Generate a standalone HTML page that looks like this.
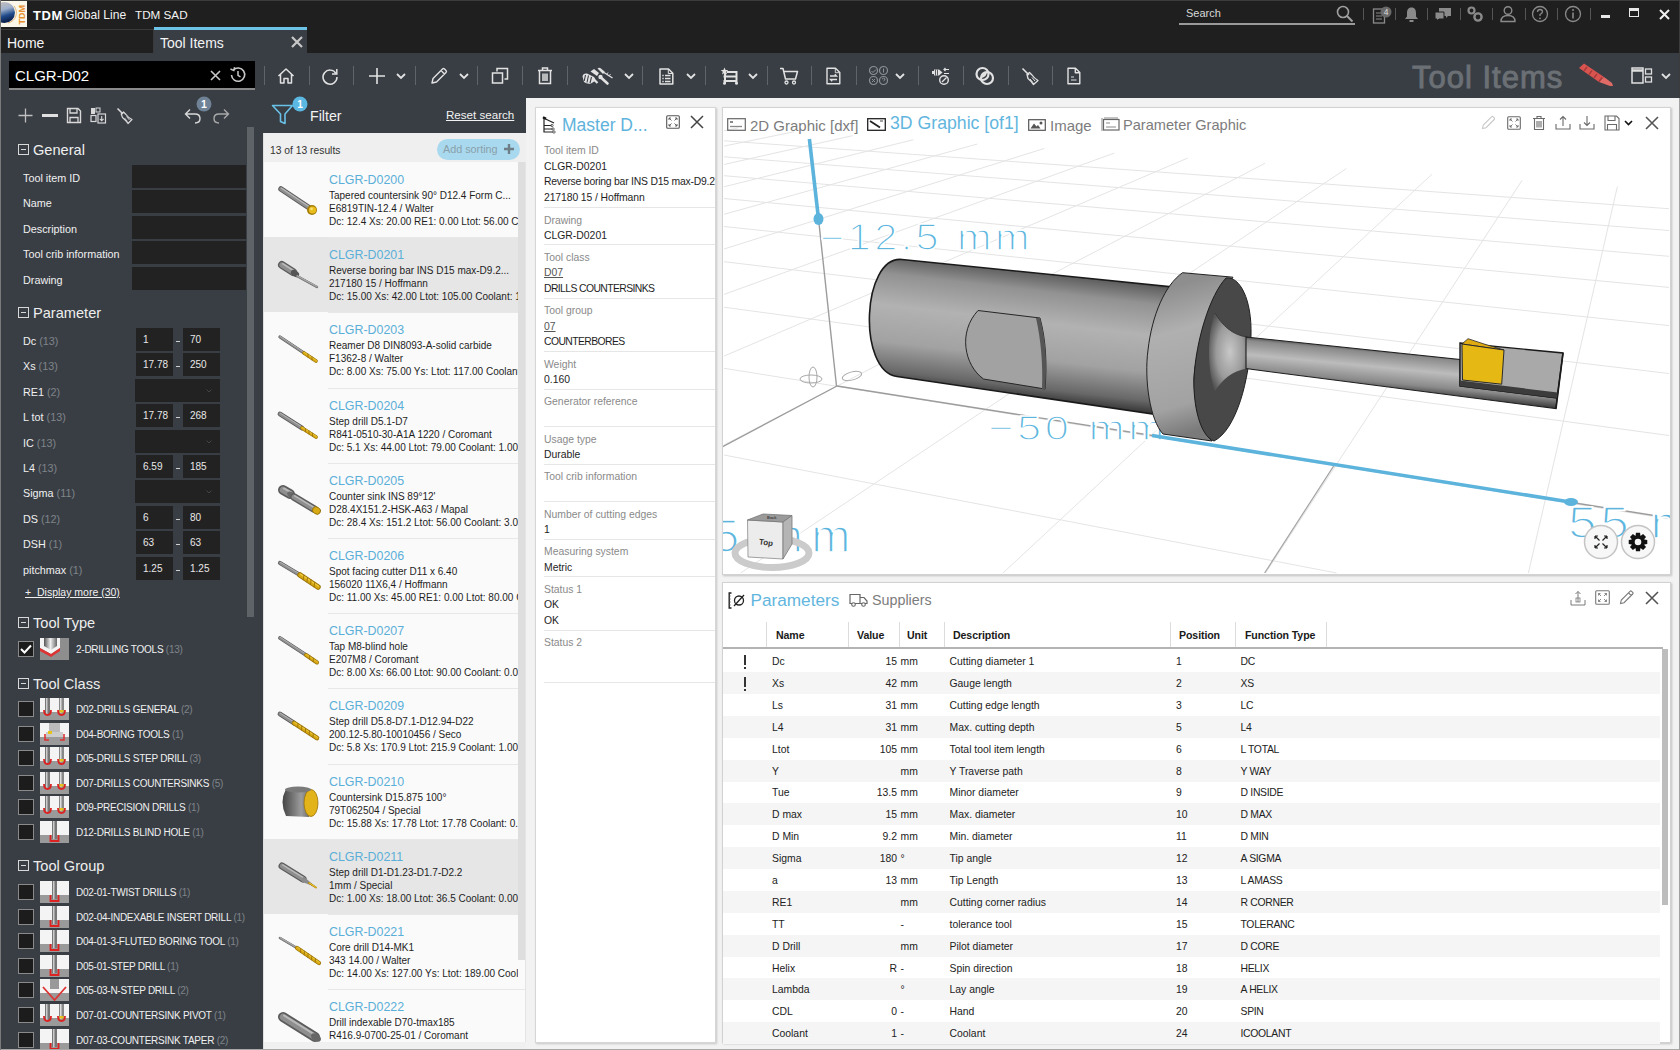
<!DOCTYPE html><html><head><meta charset="utf-8"><style>
*{margin:0;padding:0;box-sizing:border-box}
html,body{width:1680px;height:1050px;overflow:hidden;background:#f0f0f0;font-family:"Liberation Sans",sans-serif;}
.a{position:absolute}
.t{position:absolute;white-space:nowrap;line-height:1}
svg{position:absolute;overflow:visible}
</style></head><body>
<div class="a" style="left:0;top:0;width:1680px;height:30px;background:#1f1f1f"></div>
<div class="a" style="left:0;top:30px;width:1680px;height:23px;background:#1f1f1f"></div>
<div class="a" style="left:0;top:53px;width:1680px;height:45px;background:#393e45"></div>
<div class="a" style="left:0;top:98px;width:263px;height:952px;background:#393e45"></div>
<div class="a" style="left:263px;top:98px;width:263px;height:35px;background:#393e45"></div>
<div class="a" style="left:263px;top:133px;width:263px;height:917px;background:#fafafa"></div>
<div class="a" style="left:526px;top:98px;width:1154px;height:952px;background:#f2f2f2"></div>
<svg style="left:0;top:0" width="28" height="28" viewBox="0 0 28 28">
<defs><linearGradient id="glb" x1="0" y1="0" x2="0.3" y2="1"><stop offset="0" stop-color="#c9c2b8"/><stop offset="0.45" stop-color="#9fb0cc"/><stop offset="0.75" stop-color="#1f4a8a"/><stop offset="1" stop-color="#0d2350"/></linearGradient></defs>
<rect x="1" y="1" width="26" height="26" fill="#fbf6ea"/>
<circle cx="4.5" cy="12.5" r="10.5" fill="url(#glb)"/>
<path d="M14 6 A10.5 10.5 0 0 1 8 23" fill="none" stroke="#e0a860" stroke-width="0.8"/>
<text x="0" y="0" transform="translate(24.5,24.5) rotate(-90)" font-family="Liberation Sans" font-weight="bold" font-size="9" fill="#e8902e">TDM</text>
</svg>
<div class="t" style="left:33px;top:9px;font-size:13px;color:#fff;font-weight:bold;letter-spacing:0.6px">TDM</div>
<div class="t" style="left:65px;top:9px;font-size:12.1px;color:#f2f2f2">Global Line</div>
<div class="t" style="left:135px;top:9px;font-size:11.7px;color:#f2f2f2">TDM SAD</div>
<div class="t" style="left:1186px;top:8px;font-size:11px;color:#d8d8d8">Search</div>
<div class="a" style="left:1179px;top:23px;width:176px;height:2px;background:#9a9a9a"></div>
<svg style="left:1336px;top:5px" width="18" height="18" viewBox="0 0 18 18"><circle cx="7" cy="7" r="5.5" fill="none" stroke="#a0a0a0" stroke-width="1.6"/><path d="M11 11 L16.5 16.5" stroke="#a0a0a0" stroke-width="2"/></svg>
<div class="a" style="left:1363px;top:8px;width:1px;height:12px;background:#555"></div>
<div class="a" style="left:1395px;top:8px;width:1px;height:12px;background:#555"></div>
<div class="a" style="left:1427px;top:8px;width:1px;height:12px;background:#555"></div>
<div class="a" style="left:1460px;top:8px;width:1px;height:12px;background:#555"></div>
<div class="a" style="left:1492px;top:8px;width:1px;height:12px;background:#555"></div>
<div class="a" style="left:1525px;top:8px;width:1px;height:12px;background:#555"></div>
<div class="a" style="left:1557px;top:8px;width:1px;height:12px;background:#555"></div>
<div class="a" style="left:1590px;top:8px;width:1px;height:12px;background:#555"></div>
<svg style="left:1372px;top:6px" width="22" height="20" viewBox="0 0 22 20"><rect x="1.5" y="3" width="11" height="14" fill="none" stroke="#8a8a8a" stroke-width="1.3"/><path d="M4 7h6M4 10h6M4 13h6" stroke="#8a8a8a" stroke-width="1"/><circle cx="14" cy="6" r="5.5" fill="#6a6a6a"/><text x="14" y="9" text-anchor="middle" font-size="8.5" fill="#ddd" font-family="Liberation Sans">4</text></svg>
<svg style="left:1403px;top:6px" width="17" height="17" viewBox="0 0 17 17"><path d="M8.5 1.5 C5 1.5 4 4 4 7 L4 10.5 L2 13 L15 13 L13 10.5 L13 7 C13 4 12 1.5 8.5 1.5Z" fill="#8a8a8a"/><rect x="6.5" y="14" width="4" height="2" fill="#8a8a8a"/></svg>
<svg style="left:1434px;top:6px" width="19" height="17" viewBox="0 0 19 17"><path d="M5 2h12v8h-3l-2 2v-2H5z" fill="#8a8a8a"/><path d="M1 6h9v7H5l-2 2v-2H1z" fill="#8a8a8a" stroke="#1f1f1f" stroke-width="1"/></svg>
<svg style="left:1466px;top:5px" width="18" height="18" viewBox="0 0 18 18"><circle cx="5.5" cy="5.5" r="3" fill="none" stroke="#8a8a8a" stroke-width="2.2"/><circle cx="12" cy="12" r="3.6" fill="none" stroke="#8a8a8a" stroke-width="2.4"/></svg>
<svg style="left:1499px;top:5px" width="18" height="18" viewBox="0 0 18 18"><circle cx="9" cy="5.5" r="3.8" fill="none" stroke="#8a8a8a" stroke-width="1.4"/><path d="M2 16.5 Q2 10.5 9 10.5 Q16 10.5 16 16.5Z" fill="none" stroke="#8a8a8a" stroke-width="1.4"/></svg>
<svg style="left:1531px;top:5px" width="18" height="18" viewBox="0 0 18 18"><circle cx="9" cy="9" r="7.5" fill="none" stroke="#8a8a8a" stroke-width="1.3"/><path d="M6.5 7 Q6.5 4.5 9 4.5 Q11.5 4.5 11.5 6.8 Q11.5 8.3 9 9.5 L9 11" fill="none" stroke="#8a8a8a" stroke-width="1.3"/><circle cx="9" cy="13.3" r="0.9" fill="#8a8a8a"/></svg>
<svg style="left:1564px;top:5px" width="18" height="18" viewBox="0 0 18 18"><circle cx="9" cy="9" r="7.5" fill="none" stroke="#8a8a8a" stroke-width="1.3"/><path d="M9 7.5 L9 13.5" stroke="#8a8a8a" stroke-width="1.6"/><circle cx="9" cy="5" r="1" fill="#8a8a8a"/></svg>
<div class="a" style="left:1601px;top:15px;width:9px;height:3px;background:#e8e8e8"></div>
<div class="a" style="left:1629px;top:8px;width:10px;height:9px;border:1.3px solid #e8e8e8;border-top-width:3px"></div>
<svg style="left:1659px;top:9px" width="11" height="11" viewBox="0 0 11 11"><path d="M1 1L10 10M10 1L1 10" stroke="#f0f0f0" stroke-width="2"/></svg>
<div class="a" style="left:0px;top:29px;width:154px;height:24px;background:#202020;border-top:1px solid #3a3a3a;border-right:1px solid #3a3a3a"></div>
<div class="t" style="left:7px;top:36px;font-size:14px;color:#f4f4f4">Home</div>
<div class="a" style="left:154px;top:27px;width:153px;height:26px;background:#393e45;border-top:3px solid #6cc3e6"></div>
<div class="t" style="left:160px;top:36px;font-size:14px;color:#f4f4f4">Tool Items</div>
<svg style="left:291px;top:36px" width="12" height="12" viewBox="0 0 12 12"><path d="M1 1L11 11M11 1L1 11" stroke="#c8c8c8" stroke-width="2.2"/></svg><div class="a" style="left:9px;top:61px;width:246px;height:29px;background:#000;border-bottom:2px solid #8a8a8a"></div>
<div class="t" style="left:15px;top:68px;font-size:15px;color:#fff">CLGR-D02</div>
<svg style="left:210px;top:70px" width="11" height="11" viewBox="0 0 11 11"><path d="M1 1L10 10M10 1L1 10" stroke="#c8c8c8" stroke-width="1.6"/></svg>
<svg style="left:229px;top:66px" width="18" height="18" viewBox="0 0 18 18"><path d="M4.2 4.2 A6.6 6.6 0 1 1 2.5 9" fill="none" stroke="#c8c8c8" stroke-width="1.6"/><path d="M1.5 3 L4.8 4.6 L5.5 1.2" fill="none" stroke="#c8c8c8" stroke-width="1.4"/><path d="M9 5 V9.3 L11.5 11" fill="none" stroke="#c8c8c8" stroke-width="1.5"/></svg>
<div class="a" style="left:264px;top:66px;width:1px;height:19px;background:#5f646a"></div>
<div class="a" style="left:309px;top:66px;width:1px;height:19px;background:#5f646a"></div>
<div class="a" style="left:353px;top:66px;width:1px;height:19px;background:#5f646a"></div>
<div class="a" style="left:415px;top:66px;width:1px;height:19px;background:#5f646a"></div>
<div class="a" style="left:477px;top:66px;width:1px;height:19px;background:#5f646a"></div>
<div class="a" style="left:522px;top:66px;width:1px;height:19px;background:#5f646a"></div>
<div class="a" style="left:567px;top:66px;width:1px;height:19px;background:#5f646a"></div>
<div class="a" style="left:642px;top:66px;width:1px;height:19px;background:#5f646a"></div>
<div class="a" style="left:705px;top:66px;width:1px;height:19px;background:#5f646a"></div>
<div class="a" style="left:767px;top:66px;width:1px;height:19px;background:#5f646a"></div>
<div class="a" style="left:811px;top:66px;width:1px;height:19px;background:#5f646a"></div>
<div class="a" style="left:856px;top:66px;width:1px;height:19px;background:#5f646a"></div>
<div class="a" style="left:918px;top:66px;width:1px;height:19px;background:#5f646a"></div>
<div class="a" style="left:963px;top:66px;width:1px;height:19px;background:#5f646a"></div>
<div class="a" style="left:1008px;top:66px;width:1px;height:19px;background:#5f646a"></div>
<div class="a" style="left:1052px;top:66px;width:1px;height:19px;background:#5f646a"></div>
<svg style="left:396px;top:73px" width="10" height="6" viewBox="0 0 10 6"><path d="M1 1L5 5L9 1" fill="none" stroke="#e2e2e2" stroke-width="1.8"/></svg>
<svg style="left:459px;top:73px" width="10" height="6" viewBox="0 0 10 6"><path d="M1 1L5 5L9 1" fill="none" stroke="#e2e2e2" stroke-width="1.8"/></svg>
<svg style="left:624px;top:73px" width="10" height="6" viewBox="0 0 10 6"><path d="M1 1L5 5L9 1" fill="none" stroke="#e2e2e2" stroke-width="1.8"/></svg>
<svg style="left:686px;top:73px" width="10" height="6" viewBox="0 0 10 6"><path d="M1 1L5 5L9 1" fill="none" stroke="#e2e2e2" stroke-width="1.8"/></svg>
<svg style="left:748px;top:73px" width="10" height="6" viewBox="0 0 10 6"><path d="M1 1L5 5L9 1" fill="none" stroke="#e2e2e2" stroke-width="1.8"/></svg>
<svg style="left:895px;top:73px" width="10" height="6" viewBox="0 0 10 6"><path d="M1 1L5 5L9 1" fill="none" stroke="#e2e2e2" stroke-width="1.8"/></svg>
<svg style="left:277px;top:67px" width="18" height="18" viewBox="0 0 18 18"><path d="M1.5 9 L9 2 L16.5 9 M3.5 7.5 V16 H7 V11.5 H11 V16 H14.5 V7.5" fill="none" stroke="#e2e2e2" stroke-width="1.5" stroke-linejoin="round"/></svg>
<svg style="left:321px;top:67px" width="18" height="18" viewBox="0 0 18 18"><path d="M15 6.5 A7 7 0 1 0 16 10" fill="none" stroke="#e2e2e2" stroke-width="1.5"/><path d="M15.8 2 V7 H11" fill="none" stroke="#e2e2e2" stroke-width="1.5"/></svg>
<svg style="left:368px;top:67px" width="18" height="18" viewBox="0 0 18 18"><path d="M9 1V17M1 9H17" stroke="#e2e2e2" stroke-width="1.6"/></svg>
<svg style="left:430px;top:67px" width="18" height="18" viewBox="0 0 18 18"><path d="M2 16 L3 11.5 L12.5 2 Q13.5 1 14.5 2 L16 3.5 Q17 4.5 16 5.5 L6.5 15 Z M11 3.5 L14.5 7" fill="none" stroke="#e2e2e2" stroke-width="1.4" stroke-linejoin="round"/></svg>
<svg style="left:491px;top:67px" width="18" height="18" viewBox="0 0 18 18"><rect x="1.5" y="6" width="10" height="10" fill="none" stroke="#e2e2e2" stroke-width="1.5"/><path d="M6 4.5 V1.5 H16.5 V12 H13.5" fill="none" stroke="#e2e2e2" stroke-width="1.5"/></svg>
<svg style="left:536px;top:66px" width="18" height="19" viewBox="0 0 18 19"><path d="M2 4.5H16M6.5 4.5V2H11.5V4.5M3.5 4.5V17.5H14.5V4.5M7 7.5V15M9 7.5V15M11 7.5V15" fill="none" stroke="#e2e2e2" stroke-width="1.5"/></svg>
<svg style="left:581px;top:67px" width="33" height="18" viewBox="0 0 33 18"><path d="M1.5 9.5 Q2 6 6 6.5 L13 10 Q15 12 14 14 L10 16.5 Q6 17.5 3 15 Z" fill="#e2e2e2"/><path d="M4.5 8 L3.2 14 M7.5 8.5 L6 15.5 M10.5 10 L9 16" stroke="#393e45" stroke-width="1.1"/><path d="M13 12.5 L16.5 16" stroke="#e2e2e2" stroke-width="2.2"/><path d="M9.5 4.5 L13 2 L18 6 L16 9Z" fill="#e2e2e2"/><circle cx="19.5" cy="10" r="2.2" fill="#e2e2e2"/><path d="M21 11.5 L26.5 16.5" stroke="#e2e2e2" stroke-width="2.6" stroke-linecap="round"/><path d="M16.5 1.5 Q18 0 20 1.5 L24 5 L22 7Z" fill="#e2e2e2"/><path d="M23 5.5 L31.5 11" stroke="#e2e2e2" stroke-width="1.3"/><path d="M26 7 l1-1.5 M28.5 8.5 l1-1.5" stroke="#e2e2e2" stroke-width="0.9"/></svg>
<svg style="left:659px;top:68px" width="15" height="17" viewBox="0 0 15 17"><path d="M1 1 H9.5 L13.8 5.3 V16 H1 Z" fill="none" stroke="#e2e2e2" stroke-width="1.5" stroke-linejoin="round"/><path d="M9.3 1 V5.5 H13.8" fill="none" stroke="#e2e2e2" stroke-width="1"/><path d="M3.3 7.5h1.4M3.3 10.5h1.4M3.3 13.5h1.4M6 7.5h5.5M6 10.5h5.5M6 13.5h5.5" stroke="#e2e2e2" stroke-width="1.3"/></svg>
<svg style="left:720px;top:67px" width="19" height="18" viewBox="0 0 19 18"><path d="M4.5 0.5 L5.6 3 L8.3 3.1 L6.2 4.8 L7 7.4 L4.5 6 L2 7.4 L2.8 4.8 L0.7 3.1 L3.4 3 Z" fill="#e2e2e2"/><path d="M7 5 H17.5 M3.5 9.5 H17.5 M3.5 14 H17.5 M5 5 V16 M16.5 5 V16.5" fill="none" stroke="#e2e2e2" stroke-width="2"/><circle cx="4.5" cy="16.3" r="1.5" fill="#e2e2e2"/><circle cx="16.5" cy="16.3" r="1.5" fill="#e2e2e2"/></svg>
<svg style="left:779px;top:66px" width="20" height="20" viewBox="0 0 20 20"><path d="M1 2.5 H4 L6.5 13 H16.5 L18.5 5.5 H5" fill="none" stroke="#e2e2e2" stroke-width="1.5" stroke-linejoin="round"/><circle cx="7.5" cy="16.5" r="1.5" fill="none" stroke="#e2e2e2" stroke-width="1.3"/><circle cx="15" cy="16.5" r="1.5" fill="none" stroke="#e2e2e2" stroke-width="1.3"/></svg>
<svg style="left:826px;top:67px" width="15" height="18" viewBox="0 0 15 18"><path d="M1 1.2 H9.5 L13.8 5.5 V16.8 H1 Z" fill="none" stroke="#e2e2e2" stroke-width="1.4" stroke-linejoin="round"/><path d="M9.3 1.2 V5.7 H13.8" fill="none" stroke="#e2e2e2" stroke-width="0.9"/><path d="M4 9 H10.5 L8.8 7.3 M11 12.5 H4.5 L6.2 14.2" fill="none" stroke="#e2e2e2" stroke-width="1.3"/></svg>
<svg style="left:868px;top:65px" width="22" height="22" viewBox="0 0 22 22"><circle cx="5.5" cy="5.5" r="4" fill="none" stroke="#8d9196" stroke-width="1.2"/><circle cx="15.5" cy="5.5" r="4" fill="none" stroke="#8d9196" stroke-width="1.2"/><circle cx="5.5" cy="15.5" r="4" fill="none" stroke="#8d9196" stroke-width="1.2"/><circle cx="15.5" cy="15.5" r="4" fill="none" stroke="#8d9196" stroke-width="1.2"/><path d="M3.5 6l1.5 1.5 3-3M15.5 3.5V7.5M4 14l3 3M7 14l-3 3M14 14 q1.5-1.5 3 0 q0 1.5 -1.5 2" fill="none" stroke="#8d9196" stroke-width="1"/></svg>
<svg style="left:931px;top:67px" width="19" height="18" viewBox="0 0 19 18"><path d="M1 4 H3 V2.5 H8 L11.5 5.5 L8 8.5 H3 V7 H1 Z" fill="#e2e2e2"/><path d="M4.5 2.5 V8.5 M6.5 2.5 V8.5" stroke="#393e45" stroke-width="0.8"/><path d="M13 2.5 H18 M14.5 1 L13 2.5 L14.5 4 M13 6.5 H18" fill="none" stroke="#e2e2e2" stroke-width="1.2"/><circle cx="13" cy="13" r="4.3" fill="none" stroke="#e2e2e2" stroke-width="1.4"/><path d="M11 15 L15.5 10.5" stroke="#e2e2e2" stroke-width="1.3"/></svg>
<svg style="left:975px;top:66px" width="20" height="20" viewBox="0 0 20 20"><circle cx="7.5" cy="8" r="6" fill="none" stroke="#e2e2e2" stroke-width="2.2"/><circle cx="12" cy="12" r="6" fill="none" stroke="#e2e2e2" stroke-width="2.2"/><path d="M6.5 12 A6 6 0 0 0 12 6 A6 6 0 0 0 6.5 12Z" fill="#e2e2e2"/></svg>
<svg style="left:1021px;top:67px" width="18" height="18" viewBox="0 0 18 18"><path d="M1.5 1.5 L8 8" stroke="#e2e2e2" stroke-width="1.6"/><path d="M6 7.5 L8.5 5.5 L11 8 Q13 11 17 13.5 L12.5 17.5 Q10 14 7 11.5 Z" fill="none" stroke="#e2e2e2" stroke-width="1.3" stroke-linejoin="round"/><path d="M9 12 L12 15.5 M11 10.5 L14 14" stroke="#e2e2e2" stroke-width="1"/></svg>
<svg style="left:1067px;top:67px" width="14" height="18" viewBox="0 0 14 18"><path d="M1 1.2 H8.5 L12.8 5.5 V16.8 H1 Z M8.3 1.2 V5.7 H12.8" fill="none" stroke="#e2e2e2" stroke-width="1.4" stroke-linejoin="round"/><path d="M4 10H7M4 13H9.5" stroke="#e2e2e2" stroke-width="1.2"/></svg>
<div class="t" style="left:1412px;top:62px;font-size:31px;color:#6b7075;-webkit-text-stroke:0.9px #6b7075;letter-spacing:1px">Tool Items</div>
<svg style="left:1578px;top:63px" width="38" height="24" viewBox="0 0 38 24"><path d="M1 5 L6 0.5 L26 14 L21 19Z" fill="#d9534f"/><path d="M21 19 L26 14 L34 20 L35 23 L32 23Z" fill="#e06a66"/><path d="M9 4l-3 4M14 7.5l-3 4M19 11l-3 4M24 14.5l-3 4" stroke="#a63c3a" stroke-width="1.4"/></svg>
<svg style="left:1631px;top:67px" width="22" height="17" viewBox="0 0 22 17"><rect x="1" y="1" width="11" height="15" fill="none" stroke="#e0e0e0" stroke-width="1.5"/><path d="M1 3.5H12" stroke="#e0e0e0" stroke-width="2.5"/><rect x="14.5" y="2" width="6" height="5" fill="none" stroke="#e0e0e0" stroke-width="1.3"/><rect x="14.5" y="10" width="6" height="5" fill="none" stroke="#e0e0e0" stroke-width="1.3"/></svg>
<svg style="left:1661px;top:73px" width="10" height="6" viewBox="0 0 10 6"><path d="M1 1L5 5L9 1" fill="none" stroke="#e0e0e0" stroke-width="1.8"/></svg><svg style="left:17px;top:107px" width="17" height="17" viewBox="0 0 17 17"><path d="M8.5 1.5V15.5M1.5 8.5H15.5" stroke="#bfbfbf" stroke-width="1.3"/></svg>
<div class="a" style="left:42px;top:114px;width:16px;height:3px;background:#e0e0e0"></div>
<svg style="left:66px;top:107px" width="16" height="17" viewBox="0 0 16 17"><path d="M1.5 1.5 H12 L14.5 4 V15.5 H1.5Z" fill="none" stroke="#d8d8d8" stroke-width="1.4"/><path d="M4 1.5 V6 H11 V1.5 M4 15.5 V10.5 H12 V15.5" fill="none" stroke="#d8d8d8" stroke-width="1.3"/></svg>
<svg style="left:90px;top:107px" width="17" height="17" viewBox="0 0 17 17"><rect x="1" y="1" width="4" height="6" fill="#d8d8d8"/><rect x="6" y="1" width="4" height="4" fill="none" stroke="#d8d8d8" stroke-width="1"/><rect x="1" y="8.5" width="5" height="6" fill="none" stroke="#d8d8d8" stroke-width="1.2"/><rect x="8" y="7" width="7.5" height="9" fill="none" stroke="#d8d8d8" stroke-width="1.2"/><path d="M11.7 9 V13.5 M9.8 11.8 L11.7 13.8 L13.6 11.8" fill="none" stroke="#d8d8d8" stroke-width="1.1"/></svg>
<svg style="left:116px;top:107px" width="17" height="18" viewBox="0 0 17 18"><path d="M1.5 1.5 L7 7" stroke="#d8d8d8" stroke-width="1.6"/><path d="M5.2 7 L7.5 5 L10 7.5 Q12 10.5 16 12.5 L12 16.5 Q9.5 13 6.5 10.5 Z" fill="none" stroke="#d8d8d8" stroke-width="1.2" stroke-linejoin="round"/><path d="M8.5 11 L11.5 14.5 M10.5 9.5 L13.5 13" stroke="#d8d8d8" stroke-width="0.9"/></svg>
<svg style="left:184px;top:107px" width="18" height="17" viewBox="0 0 18 17"><path d="M6 2.5 L1.5 7 L6 11.5 M1.5 7 H11 Q16 7 16 11.5 Q16 16 11 16" fill="none" stroke="#d8d8d8" stroke-width="1.4"/></svg>
<svg style="left:196px;top:96px" width="16" height="16" viewBox="0 0 16 16"><circle cx="8" cy="8" r="7.5" fill="#6f8296"/><text x="8" y="12" text-anchor="middle" font-size="10.5" font-weight="bold" fill="#fff" font-family="Liberation Sans">1</text></svg>
<svg style="left:212px;top:107px" width="18" height="17" viewBox="0 0 18 17"><path d="M12 2.5 L16.5 7 L12 11.5 M16.5 7 H7 Q2 7 2 11.5 Q2 16 7 16" fill="none" stroke="#a8a8a8" stroke-width="1.4"/></svg>
<div class="a" style="left:247px;top:127px;width:7px;height:490px;background:#5e6368"></div>
<div class="a" style="left:18px;top:144px;width:11px;height:11px;border:1px solid #d8d8d8"></div><div class="a" style="left:21px;top:149px;width:5px;height:1px;background:#d8d8d8"></div><div class="t" style="left:33px;top:143px;font-size:14.6px;color:#eeeeee">General</div>
<div class="a" style="left:132px;top:165px;width:114px;height:23px;background:#222222"></div>
<div class="t" style="left:23px;top:173px;font-size:10.8px;color:#f0f0f0">Tool item ID</div>
<div class="a" style="left:132px;top:190px;width:114px;height:23px;background:#222222"></div>
<div class="t" style="left:23px;top:198px;font-size:10.8px;color:#f0f0f0">Name</div>
<div class="a" style="left:132px;top:216px;width:114px;height:23px;background:#222222"></div>
<div class="t" style="left:23px;top:224px;font-size:10.8px;color:#f0f0f0">Description</div>
<div class="a" style="left:132px;top:241px;width:114px;height:23px;background:#222222"></div>
<div class="t" style="left:23px;top:249px;font-size:10.8px;color:#f0f0f0">Tool crib information</div>
<div class="a" style="left:132px;top:267px;width:114px;height:23px;background:#222222"></div>
<div class="t" style="left:23px;top:275px;font-size:10.8px;color:#f0f0f0">Drawing</div>
<div class="a" style="left:18px;top:307px;width:11px;height:11px;border:1px solid #d8d8d8"></div><div class="a" style="left:21px;top:312px;width:5px;height:1px;background:#d8d8d8"></div><div class="t" style="left:33px;top:306px;font-size:14.6px;color:#eeeeee">Parameter</div>
<div class="t" style="left:23px;top:336px;font-size:10.8px;color:#f0f0f0">Dc <span style="color:#7f8489">(13)</span></div>
<div class="a" style="left:136px;top:328px;width:37px;height:23px;background:#222222"></div>
<div class="a" style="left:183px;top:328px;width:37px;height:23px;background:#222222"></div>
<div class="t" style="left:143px;top:335px;font-size:10px;color:#e8e8e8">1</div>
<div class="t" style="left:190px;top:335px;font-size:10px;color:#e8e8e8">70</div>
<div class="a" style="left:176px;top:341px;width:4px;height:1px;background:#cfcfcf"></div>
<div class="t" style="left:23px;top:361px;font-size:10.8px;color:#f0f0f0">Xs <span style="color:#7f8489">(13)</span></div>
<div class="a" style="left:136px;top:353px;width:37px;height:23px;background:#222222"></div>
<div class="a" style="left:183px;top:353px;width:37px;height:23px;background:#222222"></div>
<div class="t" style="left:143px;top:360px;font-size:10px;color:#e8e8e8">17.78</div>
<div class="t" style="left:190px;top:360px;font-size:10px;color:#e8e8e8">250</div>
<div class="a" style="left:176px;top:366px;width:4px;height:1px;background:#cfcfcf"></div>
<div class="t" style="left:23px;top:387px;font-size:10.8px;color:#f0f0f0">RE1 <span style="color:#7f8489">(2)</span></div>
<div class="a" style="left:135px;top:379px;width:85px;height:23px;background:#222222"></div>
<svg style="left:206px;top:389px" width="6" height="4" viewBox="0 0 6 4"><path d="M0.5 0.5L3 3L5.5 0.5" fill="none" stroke="#444" stroke-width="1"/></svg>
<div class="t" style="left:23px;top:412px;font-size:10.8px;color:#f0f0f0">L tot <span style="color:#7f8489">(13)</span></div>
<div class="a" style="left:136px;top:404px;width:37px;height:23px;background:#222222"></div>
<div class="a" style="left:183px;top:404px;width:37px;height:23px;background:#222222"></div>
<div class="t" style="left:143px;top:411px;font-size:10px;color:#e8e8e8">17.78</div>
<div class="t" style="left:190px;top:411px;font-size:10px;color:#e8e8e8">268</div>
<div class="a" style="left:176px;top:417px;width:4px;height:1px;background:#cfcfcf"></div>
<div class="t" style="left:23px;top:438px;font-size:10.8px;color:#f0f0f0">IC <span style="color:#7f8489">(13)</span></div>
<div class="a" style="left:135px;top:430px;width:85px;height:23px;background:#222222"></div>
<svg style="left:206px;top:440px" width="6" height="4" viewBox="0 0 6 4"><path d="M0.5 0.5L3 3L5.5 0.5" fill="none" stroke="#444" stroke-width="1"/></svg>
<div class="t" style="left:23px;top:463px;font-size:10.8px;color:#f0f0f0">L4 <span style="color:#7f8489">(13)</span></div>
<div class="a" style="left:136px;top:455px;width:37px;height:23px;background:#222222"></div>
<div class="a" style="left:183px;top:455px;width:37px;height:23px;background:#222222"></div>
<div class="t" style="left:143px;top:462px;font-size:10px;color:#e8e8e8">6.59</div>
<div class="t" style="left:190px;top:462px;font-size:10px;color:#e8e8e8">185</div>
<div class="a" style="left:176px;top:468px;width:4px;height:1px;background:#cfcfcf"></div>
<div class="t" style="left:23px;top:488px;font-size:10.8px;color:#f0f0f0">Sigma <span style="color:#7f8489">(11)</span></div>
<div class="a" style="left:135px;top:480px;width:85px;height:23px;background:#222222"></div>
<svg style="left:206px;top:490px" width="6" height="4" viewBox="0 0 6 4"><path d="M0.5 0.5L3 3L5.5 0.5" fill="none" stroke="#444" stroke-width="1"/></svg>
<div class="t" style="left:23px;top:514px;font-size:10.8px;color:#f0f0f0">DS <span style="color:#7f8489">(12)</span></div>
<div class="a" style="left:136px;top:506px;width:37px;height:23px;background:#222222"></div>
<div class="a" style="left:183px;top:506px;width:37px;height:23px;background:#222222"></div>
<div class="t" style="left:143px;top:513px;font-size:10px;color:#e8e8e8">6</div>
<div class="t" style="left:190px;top:513px;font-size:10px;color:#e8e8e8">80</div>
<div class="a" style="left:176px;top:519px;width:4px;height:1px;background:#cfcfcf"></div>
<div class="t" style="left:23px;top:539px;font-size:10.8px;color:#f0f0f0">DSH <span style="color:#7f8489">(1)</span></div>
<div class="a" style="left:136px;top:531px;width:37px;height:23px;background:#222222"></div>
<div class="a" style="left:183px;top:531px;width:37px;height:23px;background:#222222"></div>
<div class="t" style="left:143px;top:538px;font-size:10px;color:#e8e8e8">63</div>
<div class="t" style="left:190px;top:538px;font-size:10px;color:#e8e8e8">63</div>
<div class="a" style="left:176px;top:544px;width:4px;height:1px;background:#cfcfcf"></div>
<div class="t" style="left:23px;top:565px;font-size:10.8px;color:#f0f0f0">pitchmax <span style="color:#7f8489">(1)</span></div>
<div class="a" style="left:136px;top:557px;width:37px;height:23px;background:#222222"></div>
<div class="a" style="left:183px;top:557px;width:37px;height:23px;background:#222222"></div>
<div class="t" style="left:143px;top:564px;font-size:10px;color:#e8e8e8">1.25</div>
<div class="t" style="left:190px;top:564px;font-size:10px;color:#e8e8e8">1.25</div>
<div class="a" style="left:176px;top:570px;width:4px;height:1px;background:#cfcfcf"></div>
<div class="t" style="left:25px;top:587px;font-size:10.5px;color:#f0f0f0;text-decoration:underline">+&nbsp; Display more (30)</div>
<div class="a" style="left:18px;top:617px;width:11px;height:11px;border:1px solid #d8d8d8"></div><div class="a" style="left:21px;top:622px;width:5px;height:1px;background:#d8d8d8"></div><div class="t" style="left:33px;top:616px;font-size:14.6px;color:#eeeeee">Tool Type</div>
<div class="a" style="left:18px;top:641px;width:16px;height:16px;background:#1c1c1c;border:1px solid #8a8a8a"></div><svg style="left:20px;top:644px" width="12" height="10" viewBox="0 0 12 10"><path d="M1 5 L4.5 8.5 L11 1.5" fill="none" stroke="#fff" stroke-width="2"/></svg>
<svg style="left:40px;top:638px" width="29" height="22" viewBox="0 0 29 22"><rect x="0" y="0" width="29" height="22" fill="#f4f4f4"/><defs><linearGradient id="gt" x1="0" x2="1"><stop offset="0" stop-color="#555"/><stop offset="0.5" stop-color="#eee"/><stop offset="1" stop-color="#666"/></linearGradient></defs><path d="M0 0 H29 V22 H0Z" fill="#f4f4f4"/><path d="M0 10 L11 16 L20 10 V0 H29 V22 H0Z" fill="#8e8e8e"/><path d="M0 10 L11 16 L20 10 L20 13 L11 19 L0 13Z" fill="#d33"/><path d="M4 0 H17 V8 L11 12 L4 8Z" fill="url(#gt)"/></svg>
<div class="t" style="left:76px;top:645px;font-size:10px;letter-spacing:-0.25px;color:#f0f0f0">2-DRILLING TOOLS <span style="color:#7f8489">(13)</span></div>
<div class="a" style="left:18px;top:678px;width:11px;height:11px;border:1px solid #d8d8d8"></div><div class="a" style="left:21px;top:683px;width:5px;height:1px;background:#d8d8d8"></div><div class="t" style="left:33px;top:677px;font-size:14.6px;color:#eeeeee">Tool Class</div>
<div class="a" style="left:18px;top:701px;width:16px;height:16px;background:#1c1c1c;border:1px solid #8a8a8a"></div>
<svg style="left:40px;top:698px" width="29" height="22" viewBox="0 0 29 22"><rect x="0" y="0" width="29" height="22" fill="#f4f4f4"/><rect x="0" y="14" width="29" height="8" fill="#9a9a9a"/><rect x="5" y="0" width="5" height="16" fill="#777"/><rect x="6" y="0" width="1.5" height="16" fill="#ccc"/><rect x="19" y="0" width="5" height="15" fill="#888"/><rect x="20" y="0" width="1.5" height="15" fill="#ddd"/><path d="M4 12 Q4 17 7.5 17 Q11 17 11 12" fill="none" stroke="#d22" stroke-width="1.8"/><path d="M18 12 Q18 17 21.5 17 Q25 17 25 12" fill="none" stroke="#d22" stroke-width="1.8"/><rect x="19.5" y="12" width="4" height="2.5" fill="#e6c31a"/></svg>
<div class="t" style="left:76px;top:705px;font-size:10px;letter-spacing:-0.25px;color:#f0f0f0">D02-DRILLS GENERAL <span style="color:#7f8489">(2)</span></div>
<div class="a" style="left:18px;top:726px;width:16px;height:16px;background:#1c1c1c;border:1px solid #8a8a8a"></div>
<svg style="left:40px;top:723px" width="29" height="22" viewBox="0 0 29 22"><rect x="0" y="0" width="29" height="22" fill="#f4f4f4"/><rect x="0" y="14" width="29" height="8" fill="#9a9a9a"/><rect x="9" y="0" width="11" height="10" fill="#bbb"/><rect x="6" y="9" width="17" height="5" fill="#ccc"/><path d="M5 11 V17 H9 M24 11 V17 H20" fill="none" stroke="#d33" stroke-width="1.6"/><rect x="8" y="8" width="4" height="3" fill="#e6c31a"/></svg>
<div class="t" style="left:76px;top:730px;font-size:10px;letter-spacing:-0.25px;color:#f0f0f0">D04-BORING TOOLS <span style="color:#7f8489">(1)</span></div>
<div class="a" style="left:18px;top:750px;width:16px;height:16px;background:#1c1c1c;border:1px solid #8a8a8a"></div>
<svg style="left:40px;top:747px" width="29" height="22" viewBox="0 0 29 22"><rect x="0" y="0" width="29" height="22" fill="#f4f4f4"/><rect x="0" y="14" width="29" height="8" fill="#9a9a9a"/><rect x="5" y="0" width="5" height="16" fill="#777"/><rect x="6" y="0" width="1.5" height="16" fill="#ccc"/><rect x="19" y="0" width="5" height="15" fill="#888"/><rect x="20" y="0" width="1.5" height="15" fill="#ddd"/><path d="M4 12 Q4 17 7.5 17 Q11 17 11 12" fill="none" stroke="#d22" stroke-width="1.8"/><path d="M18 12 Q18 17 21.5 17 Q25 17 25 12" fill="none" stroke="#d22" stroke-width="1.8"/><rect x="19.5" y="12" width="4" height="2.5" fill="#e6c31a"/></svg>
<div class="t" style="left:76px;top:754px;font-size:10px;letter-spacing:-0.25px;color:#f0f0f0">D05-DRILLS STEP DRILL <span style="color:#7f8489">(3)</span></div>
<div class="a" style="left:18px;top:775px;width:16px;height:16px;background:#1c1c1c;border:1px solid #8a8a8a"></div>
<svg style="left:40px;top:772px" width="29" height="22" viewBox="0 0 29 22"><rect x="0" y="0" width="29" height="22" fill="#f4f4f4"/><rect x="0" y="14" width="29" height="8" fill="#9a9a9a"/><rect x="5" y="0" width="5" height="16" fill="#777"/><rect x="6" y="0" width="1.5" height="16" fill="#ccc"/><rect x="19" y="0" width="5" height="15" fill="#888"/><rect x="20" y="0" width="1.5" height="15" fill="#ddd"/><path d="M4 12 Q4 17 7.5 17 Q11 17 11 12" fill="none" stroke="#d22" stroke-width="1.8"/><path d="M18 12 Q18 17 21.5 17 Q25 17 25 12" fill="none" stroke="#d22" stroke-width="1.8"/><rect x="19.5" y="12" width="4" height="2.5" fill="#e6c31a"/></svg>
<div class="t" style="left:76px;top:779px;font-size:10px;letter-spacing:-0.25px;color:#f0f0f0">D07-DRILLS COUNTERSINKS <span style="color:#7f8489">(5)</span></div>
<div class="a" style="left:18px;top:799px;width:16px;height:16px;background:#1c1c1c;border:1px solid #8a8a8a"></div>
<svg style="left:40px;top:796px" width="29" height="22" viewBox="0 0 29 22"><rect x="0" y="0" width="29" height="22" fill="#f4f4f4"/><rect x="0" y="14" width="29" height="8" fill="#9a9a9a"/><rect x="5" y="0" width="5" height="16" fill="#777"/><rect x="6" y="0" width="1.5" height="16" fill="#ccc"/><rect x="19" y="0" width="5" height="15" fill="#888"/><rect x="20" y="0" width="1.5" height="15" fill="#ddd"/><path d="M4 12 Q4 17 7.5 17 Q11 17 11 12" fill="none" stroke="#d22" stroke-width="1.8"/><path d="M18 12 Q18 17 21.5 17 Q25 17 25 12" fill="none" stroke="#d22" stroke-width="1.8"/><rect x="19.5" y="12" width="4" height="2.5" fill="#e6c31a"/></svg>
<div class="t" style="left:76px;top:803px;font-size:10px;letter-spacing:-0.25px;color:#f0f0f0">D09-PRECISION DRILLS <span style="color:#7f8489">(1)</span></div>
<div class="a" style="left:18px;top:824px;width:16px;height:16px;background:#1c1c1c;border:1px solid #8a8a8a"></div>
<svg style="left:40px;top:821px" width="29" height="22" viewBox="0 0 29 22"><rect x="0" y="0" width="29" height="22" fill="#f4f4f4"/><rect x="0" y="14" width="29" height="8" fill="#9a9a9a"/><rect x="12" y="0" width="5" height="18" fill="#777"/><rect x="13" y="0" width="1.5" height="18" fill="#ccc"/><path d="M10.5 14 V20 H18.5 V14" fill="none" stroke="#d22" stroke-width="1.8"/></svg>
<div class="t" style="left:76px;top:828px;font-size:10px;letter-spacing:-0.25px;color:#f0f0f0">D12-DRILLS BLIND HOLE <span style="color:#7f8489">(1)</span></div>
<div class="a" style="left:18px;top:860px;width:11px;height:11px;border:1px solid #d8d8d8"></div><div class="a" style="left:21px;top:865px;width:5px;height:1px;background:#d8d8d8"></div><div class="t" style="left:33px;top:859px;font-size:14.6px;color:#eeeeee">Tool Group</div>
<div class="a" style="left:18px;top:884px;width:16px;height:16px;background:#1c1c1c;border:1px solid #8a8a8a"></div>
<svg style="left:40px;top:881px" width="29" height="22" viewBox="0 0 29 22"><rect x="0" y="0" width="29" height="22" fill="#f4f4f4"/><rect x="0" y="14" width="29" height="8" fill="#9a9a9a"/><rect x="12" y="0" width="5" height="18" fill="#777"/><rect x="13" y="0" width="1.5" height="18" fill="#ccc"/><path d="M10.5 14 V20 H18.5 V14" fill="none" stroke="#d22" stroke-width="1.8"/></svg>
<div class="t" style="left:76px;top:888px;font-size:10px;letter-spacing:-0.25px;color:#f0f0f0">D02-01-TWIST DRILLS <span style="color:#7f8489">(1)</span></div>
<div class="a" style="left:18px;top:909px;width:16px;height:16px;background:#1c1c1c;border:1px solid #8a8a8a"></div>
<svg style="left:40px;top:906px" width="29" height="22" viewBox="0 0 29 22"><rect x="0" y="0" width="29" height="22" fill="#f4f4f4"/><rect x="0" y="14" width="29" height="8" fill="#9a9a9a"/><rect x="12" y="0" width="5" height="18" fill="#777"/><rect x="13" y="0" width="1.5" height="18" fill="#ccc"/><path d="M10.5 14 V20 H18.5 V14" fill="none" stroke="#d22" stroke-width="1.8"/></svg>
<div class="t" style="left:76px;top:913px;font-size:10px;letter-spacing:-0.25px;color:#f0f0f0">D02-04-INDEXABLE INSERT DRILL <span style="color:#7f8489">(1)</span></div>
<div class="a" style="left:18px;top:933px;width:16px;height:16px;background:#1c1c1c;border:1px solid #8a8a8a"></div>
<svg style="left:40px;top:930px" width="29" height="22" viewBox="0 0 29 22"><rect x="0" y="0" width="29" height="22" fill="#f4f4f4"/><rect x="0" y="14" width="29" height="8" fill="#9a9a9a"/><rect x="12" y="0" width="5" height="18" fill="#777"/><rect x="13" y="0" width="1.5" height="18" fill="#ccc"/><path d="M10.5 14 V20 H18.5 V14" fill="none" stroke="#d22" stroke-width="1.8"/></svg>
<div class="t" style="left:76px;top:937px;font-size:10px;letter-spacing:-0.25px;color:#f0f0f0">D04-01-3-FLUTED BORING TOOL <span style="color:#7f8489">(1)</span></div>
<div class="a" style="left:18px;top:958px;width:16px;height:16px;background:#1c1c1c;border:1px solid #8a8a8a"></div>
<svg style="left:40px;top:955px" width="29" height="22" viewBox="0 0 29 22"><rect x="0" y="0" width="29" height="22" fill="#f4f4f4"/><rect x="0" y="14" width="29" height="8" fill="#9a9a9a"/><rect x="12" y="0" width="5" height="18" fill="#777"/><rect x="13" y="0" width="1.5" height="18" fill="#ccc"/><path d="M10.5 14 V20 H18.5 V14" fill="none" stroke="#d22" stroke-width="1.8"/></svg>
<div class="t" style="left:76px;top:962px;font-size:10px;letter-spacing:-0.25px;color:#f0f0f0">D05-01-STEP DRILL <span style="color:#7f8489">(1)</span></div>
<div class="a" style="left:18px;top:982px;width:16px;height:16px;background:#1c1c1c;border:1px solid #8a8a8a"></div>
<svg style="left:40px;top:979px" width="29" height="22" viewBox="0 0 29 22"><rect x="0" y="0" width="29" height="22" fill="#f4f4f4"/><rect x="0" y="14" width="29" height="8" fill="#9a9a9a"/><rect x="10" y="0" width="9" height="10" fill="#999"/><path d="M3 8 L14.5 21 L26 8" fill="none" stroke="#d33" stroke-width="1.8"/></svg>
<div class="t" style="left:76px;top:986px;font-size:10px;letter-spacing:-0.25px;color:#f0f0f0">D05-03-N-STEP DRILL <span style="color:#7f8489">(2)</span></div>
<div class="a" style="left:18px;top:1007px;width:16px;height:16px;background:#1c1c1c;border:1px solid #8a8a8a"></div>
<svg style="left:40px;top:1004px" width="29" height="22" viewBox="0 0 29 22"><rect x="0" y="0" width="29" height="22" fill="#f4f4f4"/><rect x="0" y="14" width="29" height="8" fill="#9a9a9a"/><rect x="5" y="0" width="5" height="16" fill="#777"/><rect x="6" y="0" width="1.5" height="16" fill="#ccc"/><rect x="19" y="0" width="5" height="15" fill="#888"/><rect x="20" y="0" width="1.5" height="15" fill="#ddd"/><path d="M4 12 Q4 17 7.5 17 Q11 17 11 12" fill="none" stroke="#d22" stroke-width="1.8"/><path d="M18 12 Q18 17 21.5 17 Q25 17 25 12" fill="none" stroke="#d22" stroke-width="1.8"/><rect x="19.5" y="12" width="4" height="2.5" fill="#e6c31a"/></svg>
<div class="t" style="left:76px;top:1011px;font-size:10px;letter-spacing:-0.25px;color:#f0f0f0">D07-01-COUNTERSINK PIVOT <span style="color:#7f8489">(1)</span></div>
<div class="a" style="left:18px;top:1032px;width:16px;height:16px;background:#1c1c1c;border:1px solid #8a8a8a"></div>
<svg style="left:40px;top:1029px" width="29" height="22" viewBox="0 0 29 22"><rect x="0" y="0" width="29" height="22" fill="#f4f4f4"/><rect x="0" y="14" width="29" height="8" fill="#9a9a9a"/><rect x="12" y="0" width="5" height="18" fill="#777"/><rect x="13" y="0" width="1.5" height="18" fill="#ccc"/><path d="M10.5 14 V20 H18.5 V14" fill="none" stroke="#d22" stroke-width="1.8"/></svg>
<div class="t" style="left:76px;top:1036px;font-size:10px;letter-spacing:-0.25px;color:#f0f0f0">D07-03-COUNTERSINK TAPER <span style="color:#7f8489">(2)</span></div><svg style="left:271px;top:104px" width="23" height="21" viewBox="0 0 23 21"><path d="M1.5 1.5 H21.5 L14 10 V19.5 L9.5 17.5 V10 Z" fill="none" stroke="#6ac1e6" stroke-width="1.6" stroke-linejoin="round"/></svg>
<svg style="left:292px;top:96px" width="16" height="16" viewBox="0 0 16 16"><circle cx="8" cy="8" r="7.5" fill="#5ab8e2"/><text x="8" y="12" text-anchor="middle" font-size="10" font-weight="bold" fill="#fff" font-family="Liberation Sans">1</text></svg>
<div class="t" style="left:310px;top:109px;font-size:14.2px;color:#f2f2f2">Filter</div>
<div class="t" style="left:446px;top:109px;font-size:11.6px;color:#f2f2f2;text-decoration:underline">Reset search</div>
<div class="a" style="left:264px;top:133px;width:262px;height:29px;background:#efefef"></div>
<div class="t" style="left:270px;top:145.5px;font-size:10.3px;color:#333">13 of 13 results</div>
<div class="a" style="left:437px;top:139px;width:83px;height:21px;background:#a9d9ee;border-radius:11px"></div>
<div class="t" style="left:443px;top:144px;font-size:10.8px;color:#8aa0aa">Add sorting</div>
<svg style="left:503px;top:143px" width="12" height="12" viewBox="0 0 12 12"><path d="M6 1V11M1 6H11" stroke="#6e7f88" stroke-width="2.4"/></svg>
<div class="a" style="left:264px;top:162px;width:262px;height:888px;background:#fafafa"></div>
<svg style="left:278px;top:182px" width="46" height="36" viewBox="0 0 46 36"><path d="M3 7L30 25" stroke="#5c5c5c" stroke-width="5.5" stroke-linecap="round"/><path d="M3 7L30 25" stroke="#8e8e8e" stroke-width="3.58" stroke-linecap="round"/><path d="M3.55 6.18L30.55 24.18" stroke="#c4c4c4" stroke-width="1.10" stroke-linecap="round" opacity="0.8"/><circle cx="34" cy="28" r="5" fill="#a67e0a"/><circle cx="34.5" cy="28" r="3.6" fill="#e8bd1c"/><circle cx="33.5" cy="26.8" r="1.4" fill="#f8e07a"/></svg>
<div class="t" style="left:329px;top:174px;font-size:12.4px;color:#5aafd8">CLGR-D0200</div>
<div class="t" style="left:329px;top:191px;font-size:10px;color:#1e1e1e;width:189px;overflow:hidden">Tapered countersink 90° D12.4 Form C...</div>
<div class="t" style="left:329px;top:204px;font-size:10px;color:#1e1e1e;width:189px;overflow:hidden">E6819TIN-12.4 / Walter</div>
<div class="t" style="left:329px;top:217px;font-size:10px;color:#1e1e1e;width:189px;overflow:hidden">Dc: 12.4 Xs: 20.00 RE1: 0.00 Ltot: 56.00 Coolant: 1</div>
<div class="a" style="left:264px;top:237px;width:254px;height:75px;background:#e6e6e6"></div>
<div class="a" style="left:328px;top:237px;width:197px;height:1px;background:#e8e8e8"></div>
<svg style="left:278px;top:257px" width="46" height="36" viewBox="0 0 46 36"><path d="M4 8L15 15" stroke="#5c5c5c" stroke-width="8" stroke-linecap="round"/><path d="M4 8L15 15" stroke="#8e8e8e" stroke-width="5.20" stroke-linecap="round"/><path d="M4.77 6.79L15.77 13.79" stroke="#c4c4c4" stroke-width="1.60" stroke-linecap="round" opacity="0.8"/><ellipse cx="17" cy="16.5" rx="3" ry="4.5" transform="rotate(-57 17 16.5)" fill="#555"/><path d="M19 19L39 30" stroke="#5c5c5c" stroke-width="2.4" stroke-linecap="round"/><path d="M19 19L39 30" stroke="#8e8e8e" stroke-width="1.56" stroke-linecap="round"/><path d="M19.21 18.62L39.21 29.62" stroke="#c4c4c4" stroke-width="0.80" stroke-linecap="round" opacity="0.8"/></svg>
<div class="t" style="left:329px;top:249px;font-size:12.4px;color:#5aafd8">CLGR-D0201</div>
<div class="t" style="left:329px;top:266px;font-size:10px;color:#1e1e1e;width:189px;overflow:hidden">Reverse boring bar INS D15 max-D9.2...</div>
<div class="t" style="left:329px;top:279px;font-size:10px;color:#1e1e1e;width:189px;overflow:hidden">217180 15 / Hoffmann</div>
<div class="t" style="left:329px;top:292px;font-size:10px;color:#1e1e1e;width:189px;overflow:hidden">Dc: 15.00 Xs: 42.00 Ltot: 105.00 Coolant: 1.00</div>
<div class="a" style="left:328px;top:312px;width:197px;height:1px;background:#e8e8e8"></div>
<svg style="left:278px;top:332px" width="46" height="36" viewBox="0 0 46 36"><path d="M2 5L26 21" stroke="#5c5c5c" stroke-width="3.2" stroke-linecap="round"/><path d="M2 5L26 21" stroke="#8e8e8e" stroke-width="2.08" stroke-linecap="round"/><path d="M2.32 4.52L26.32 20.52" stroke="#c4c4c4" stroke-width="0.80" stroke-linecap="round" opacity="0.8"/><path d="M26 21L38 29" stroke="#9a7408" stroke-width="3.6" stroke-linecap="round"/><path d="M26 21L38 29" stroke="#d7a812" stroke-width="2.34" stroke-linecap="round"/><path d="M26.36 20.46L38.36 28.46" stroke="#f6d34a" stroke-width="0.80" stroke-linecap="round" opacity="0.8"/><path d="M29.90 21.65L30.10 25.68" stroke="#9a7408" stroke-width="0.9"/><path d="M33.90 24.32L34.10 28.35" stroke="#9a7408" stroke-width="0.9"/></svg>
<div class="t" style="left:329px;top:324px;font-size:12.4px;color:#5aafd8">CLGR-D0203</div>
<div class="t" style="left:329px;top:341px;font-size:10px;color:#1e1e1e;width:189px;overflow:hidden">Reamer D8 DIN8093-A-solid carbide</div>
<div class="t" style="left:329px;top:354px;font-size:10px;color:#1e1e1e;width:189px;overflow:hidden">F1362-8 / Walter</div>
<div class="t" style="left:329px;top:367px;font-size:10px;color:#1e1e1e;width:189px;overflow:hidden">Dc: 8.00 Xs: 75.00 Ys:  Ltot: 117.00 Coolant: 0</div>
<div class="a" style="left:328px;top:388px;width:197px;height:1px;background:#e8e8e8"></div>
<svg style="left:278px;top:408px" width="46" height="36" viewBox="0 0 46 36"><path d="M2 6L24 20" stroke="#5c5c5c" stroke-width="4.8" stroke-linecap="round"/><path d="M2 6L24 20" stroke="#8e8e8e" stroke-width="3.12" stroke-linecap="round"/><path d="M2.46 5.27L24.46 19.27" stroke="#c4c4c4" stroke-width="0.96" stroke-linecap="round" opacity="0.8"/><path d="M24 20L38 29" stroke="#9a7408" stroke-width="3.8" stroke-linecap="round"/><path d="M24 20L38 29" stroke="#d7a812" stroke-width="2.47" stroke-linecap="round"/><path d="M24.37 19.42L38.37 28.42" stroke="#f6d34a" stroke-width="0.80" stroke-linecap="round" opacity="0.8"/><path d="M27.42 20.16L27.58 24.34" stroke="#9a7408" stroke-width="0.9"/><path d="M30.92 22.41L31.08 26.59" stroke="#9a7408" stroke-width="0.9"/><path d="M34.42 24.66L34.58 28.84" stroke="#9a7408" stroke-width="0.9"/></svg>
<div class="t" style="left:329px;top:400px;font-size:12.4px;color:#5aafd8">CLGR-D0204</div>
<div class="t" style="left:329px;top:417px;font-size:10px;color:#1e1e1e;width:189px;overflow:hidden">Step drill D5.1-D7</div>
<div class="t" style="left:329px;top:430px;font-size:10px;color:#1e1e1e;width:189px;overflow:hidden">R841-0510-30-A1A 1220 / Coromant</div>
<div class="t" style="left:329px;top:443px;font-size:10px;color:#1e1e1e;width:189px;overflow:hidden">Dc: 5.1 Xs: 44.00 Ltot: 79.00 Coolant: 1.00</div>
<div class="a" style="left:328px;top:463px;width:197px;height:1px;background:#e8e8e8"></div>
<svg style="left:278px;top:483px" width="46" height="36" viewBox="0 0 46 36"><path d="M5 7L12 11" stroke="#5c5c5c" stroke-width="10" stroke-linecap="round"/><path d="M5 7L12 11" stroke="#8e8e8e" stroke-width="6.50" stroke-linecap="round"/><path d="M5.89 5.44L12.89 9.44" stroke="#c4c4c4" stroke-width="2.00" stroke-linecap="round" opacity="0.8"/><ellipse cx="14" cy="12.5" rx="3" ry="5.5" transform="rotate(-57 14 12.5)" fill="#6a6a6a"/><path d="M16 14L36 26" stroke="#5c5c5c" stroke-width="7.5" stroke-linecap="round"/><path d="M16 14L36 26" stroke="#8e8e8e" stroke-width="4.88" stroke-linecap="round"/><path d="M16.69 12.84L36.69 24.84" stroke="#c4c4c4" stroke-width="1.50" stroke-linecap="round" opacity="0.8"/><ellipse cx="38.5" cy="27.5" rx="3.5" ry="4.2" transform="rotate(-57 38.5 27.5)" fill="#d8aa14" stroke="#8a6a08" stroke-width="0.8"/></svg>
<div class="t" style="left:329px;top:475px;font-size:12.4px;color:#5aafd8">CLGR-D0205</div>
<div class="t" style="left:329px;top:492px;font-size:10px;color:#1e1e1e;width:189px;overflow:hidden">Counter sink INS 89°12'</div>
<div class="t" style="left:329px;top:505px;font-size:10px;color:#1e1e1e;width:189px;overflow:hidden">D28.4X151.2-HSK-A63 / Mapal</div>
<div class="t" style="left:329px;top:518px;font-size:10px;color:#1e1e1e;width:189px;overflow:hidden">Dc: 28.4 Xs: 151.2 Ltot: 56.00 Coolant: 3.00</div>
<div class="a" style="left:328px;top:538px;width:197px;height:1px;background:#e8e8e8"></div>
<svg style="left:278px;top:558px" width="46" height="36" viewBox="0 0 46 36"><path d="M2 5L22 17" stroke="#5c5c5c" stroke-width="4.2" stroke-linecap="round"/><path d="M2 5L22 17" stroke="#8e8e8e" stroke-width="2.73" stroke-linecap="round"/><path d="M2.39 4.35L22.39 16.35" stroke="#c4c4c4" stroke-width="0.84" stroke-linecap="round" opacity="0.8"/><path d="M22 17L40 29" stroke="#9a7408" stroke-width="5.5" stroke-linecap="round"/><path d="M22 17L40 29" stroke="#d7a812" stroke-width="3.58" stroke-linecap="round"/><path d="M22.55 16.18L40.55 28.18" stroke="#f6d34a" stroke-width="1.10" stroke-linecap="round" opacity="0.8"/><path d="M25.97 16.68L25.23 22.12" stroke="#9a7408" stroke-width="0.9"/><path d="M29.57 19.08L28.83 24.52" stroke="#9a7408" stroke-width="0.9"/><path d="M33.17 21.48L32.43 26.92" stroke="#9a7408" stroke-width="0.9"/><path d="M36.77 23.88L36.03 29.32" stroke="#9a7408" stroke-width="0.9"/></svg>
<div class="t" style="left:329px;top:550px;font-size:12.4px;color:#5aafd8">CLGR-D0206</div>
<div class="t" style="left:329px;top:567px;font-size:10px;color:#1e1e1e;width:189px;overflow:hidden">Spot facing cutter D11 x 6.40</div>
<div class="t" style="left:329px;top:580px;font-size:10px;color:#1e1e1e;width:189px;overflow:hidden">156020 11X6,4 / Hoffmann</div>
<div class="t" style="left:329px;top:593px;font-size:10px;color:#1e1e1e;width:189px;overflow:hidden">Dc: 11.00 Xs: 45.00 RE1: 0.00 Ltot: 80.00 Coolant</div>
<div class="a" style="left:328px;top:613px;width:197px;height:1px;background:#e8e8e8"></div>
<svg style="left:278px;top:633px" width="46" height="36" viewBox="0 0 46 36"><path d="M2 5L28 22" stroke="#5c5c5c" stroke-width="3.8" stroke-linecap="round"/><path d="M2 5L28 22" stroke="#8e8e8e" stroke-width="2.47" stroke-linecap="round"/><path d="M2.37 4.43L28.37 21.43" stroke="#c4c4c4" stroke-width="0.80" stroke-linecap="round" opacity="0.8"/><path d="M28 22L39 29.5" stroke="#9a7408" stroke-width="4" stroke-linecap="round"/><path d="M28 22L39 29.5" stroke="#d7a812" stroke-width="2.60" stroke-linecap="round"/><path d="M28.41 21.41L39.41 28.91" stroke="#f6d34a" stroke-width="0.80" stroke-linecap="round" opacity="0.8"/><path d="M31.69 22.34L31.64 26.66" stroke="#9a7408" stroke-width="0.9"/><path d="M35.36 24.84L35.31 29.16" stroke="#9a7408" stroke-width="0.9"/></svg>
<div class="t" style="left:329px;top:625px;font-size:12.4px;color:#5aafd8">CLGR-D0207</div>
<div class="t" style="left:329px;top:642px;font-size:10px;color:#1e1e1e;width:189px;overflow:hidden">Tap M8-blind hole</div>
<div class="t" style="left:329px;top:655px;font-size:10px;color:#1e1e1e;width:189px;overflow:hidden">E207M8 / Coromant</div>
<div class="t" style="left:329px;top:668px;font-size:10px;color:#1e1e1e;width:189px;overflow:hidden">Dc: 8.00 Xs: 66.00 Ltot: 90.00 Coolant: 0.00</div>
<div class="a" style="left:328px;top:688px;width:197px;height:1px;background:#e8e8e8"></div>
<svg style="left:278px;top:708px" width="46" height="36" viewBox="0 0 46 36"><path d="M2 6L16 15" stroke="#5c5c5c" stroke-width="4.8" stroke-linecap="round"/><path d="M2 6L16 15" stroke="#8e8e8e" stroke-width="3.12" stroke-linecap="round"/><path d="M2.47 5.27L16.47 14.27" stroke="#c4c4c4" stroke-width="0.96" stroke-linecap="round" opacity="0.8"/><path d="M16 15L39 30" stroke="#9a7408" stroke-width="4.6" stroke-linecap="round"/><path d="M16 15L39 30" stroke="#d7a812" stroke-width="2.99" stroke-linecap="round"/><path d="M16.45 14.31L39.45 29.31" stroke="#f6d34a" stroke-width="0.92" stroke-linecap="round" opacity="0.8"/><path d="M19.96 15.11L19.71 19.89" stroke="#9a7408" stroke-width="0.9"/><path d="M23.79 17.61L23.54 22.39" stroke="#9a7408" stroke-width="0.9"/><path d="M27.63 20.11L27.37 24.89" stroke="#9a7408" stroke-width="0.9"/><path d="M31.46 22.61L31.21 27.39" stroke="#9a7408" stroke-width="0.9"/><path d="M35.29 25.11L35.04 29.89" stroke="#9a7408" stroke-width="0.9"/></svg>
<div class="t" style="left:329px;top:700px;font-size:12.4px;color:#5aafd8">CLGR-D0209</div>
<div class="t" style="left:329px;top:717px;font-size:10px;color:#1e1e1e;width:189px;overflow:hidden">Step drill D5.8-D7.1-D12.94-D22</div>
<div class="t" style="left:329px;top:730px;font-size:10px;color:#1e1e1e;width:189px;overflow:hidden">200.12-5.80-10010456 / Seco</div>
<div class="t" style="left:329px;top:743px;font-size:10px;color:#1e1e1e;width:189px;overflow:hidden">Dc: 5.8 Xs: 170.9 Ltot: 215.9 Coolant: 1.00</div>
<div class="a" style="left:328px;top:764px;width:197px;height:1px;background:#e8e8e8"></div>
<svg style="left:278px;top:784px" width="46" height="36" viewBox="0 0 46 36"><defs><linearGradient id="rg" x1="0" x2="1"><stop offset="0" stop-color="#444"/><stop offset="0.6" stop-color="#9c9c9c"/><stop offset="1" stop-color="#555"/></linearGradient></defs><path d="M8 5 Q1 18 8 32 L31 33 Q39 19 33 5Z" fill="url(#rg)"/><ellipse cx="33" cy="19" rx="7" ry="13.5" fill="#e3b31a" stroke="#9a7408" stroke-width="0.8"/><ellipse cx="20" cy="5.5" rx="13" ry="3" fill="#7a7a7a"/></svg>
<div class="t" style="left:329px;top:776px;font-size:12.4px;color:#5aafd8">CLGR-D0210</div>
<div class="t" style="left:329px;top:793px;font-size:10px;color:#1e1e1e;width:189px;overflow:hidden">Countersink D15.875 100°</div>
<div class="t" style="left:329px;top:806px;font-size:10px;color:#1e1e1e;width:189px;overflow:hidden">79T062504 / Special</div>
<div class="t" style="left:329px;top:819px;font-size:10px;color:#1e1e1e;width:189px;overflow:hidden">Dc: 15.88 Xs: 17.78 Ltot: 17.78 Coolant: 0.00</div>
<div class="a" style="left:264px;top:839px;width:254px;height:75px;background:#e6e6e6"></div>
<div class="a" style="left:328px;top:839px;width:197px;height:1px;background:#e8e8e8"></div>
<svg style="left:278px;top:859px" width="46" height="36" viewBox="0 0 46 36"><path d="M4 7L25 20" stroke="#5c5c5c" stroke-width="7" stroke-linecap="round"/><path d="M4 7L25 20" stroke="#8e8e8e" stroke-width="4.55" stroke-linecap="round"/><path d="M4.66 5.93L25.66 18.93" stroke="#c4c4c4" stroke-width="1.40" stroke-linecap="round" opacity="0.8"/><path d="M25 17 L38 28 L24 23Z" fill="#8a8a8a"/><path d="M31 24L38 28.5" stroke="#9a7408" stroke-width="1.8" stroke-linecap="round"/><path d="M31 24L38 28.5" stroke="#d7a812" stroke-width="1.17" stroke-linecap="round"/><path d="M31.18 23.73L38.18 28.23" stroke="#f6d34a" stroke-width="0.80" stroke-linecap="round" opacity="0.8"/></svg>
<div class="t" style="left:329px;top:851px;font-size:12.4px;color:#5aafd8">CLGR-D0211</div>
<div class="t" style="left:329px;top:868px;font-size:10px;color:#1e1e1e;width:189px;overflow:hidden">Step drill D1-D1.23-D1.7-D2.2</div>
<div class="t" style="left:329px;top:881px;font-size:10px;color:#1e1e1e;width:189px;overflow:hidden">1mm / Special</div>
<div class="t" style="left:329px;top:894px;font-size:10px;color:#1e1e1e;width:189px;overflow:hidden">Dc: 1.00 Xs: 18.00 Ltot: 36.5 Coolant: 0.00</div>
<div class="a" style="left:328px;top:914px;width:197px;height:1px;background:#e8e8e8"></div>
<svg style="left:278px;top:934px" width="46" height="36" viewBox="0 0 46 36"><path d="M2 4L19 14" stroke="#5c5c5c" stroke-width="2.6" stroke-linecap="round"/><path d="M2 4L19 14" stroke="#8e8e8e" stroke-width="1.69" stroke-linecap="round"/><path d="M2.24 3.60L19.24 13.60" stroke="#c4c4c4" stroke-width="0.80" stroke-linecap="round" opacity="0.8"/><path d="M19 14L41 29" stroke="#9a7408" stroke-width="4.2" stroke-linecap="round"/><path d="M19 14L41 29" stroke="#d7a812" stroke-width="2.73" stroke-linecap="round"/><path d="M19.43 13.38L41.43 28.38" stroke="#f6d34a" stroke-width="0.84" stroke-linecap="round" opacity="0.8"/><path d="M22.74 14.26L22.59 18.74" stroke="#9a7408" stroke-width="0.9"/><path d="M26.41 16.76L26.26 21.24" stroke="#9a7408" stroke-width="0.9"/><path d="M30.07 19.26L29.93 23.74" stroke="#9a7408" stroke-width="0.9"/><path d="M33.74 21.76L33.59 26.24" stroke="#9a7408" stroke-width="0.9"/><path d="M37.41 24.26L37.26 28.74" stroke="#9a7408" stroke-width="0.9"/></svg>
<div class="t" style="left:329px;top:926px;font-size:12.4px;color:#5aafd8">CLGR-D0221</div>
<div class="t" style="left:329px;top:943px;font-size:10px;color:#1e1e1e;width:189px;overflow:hidden">Core drill D14-MK1</div>
<div class="t" style="left:329px;top:956px;font-size:10px;color:#1e1e1e;width:189px;overflow:hidden">343 14.00 / Walter</div>
<div class="t" style="left:329px;top:969px;font-size:10px;color:#1e1e1e;width:189px;overflow:hidden">Dc: 14.00 Xs: 127.00 Ys:  Ltot: 189.00 Coolant: 1</div>
<div class="a" style="left:328px;top:989px;width:197px;height:1px;background:#e8e8e8"></div>
<svg style="left:278px;top:1009px" width="46" height="36" viewBox="0 0 46 36"><path d="M5 8L37 28" stroke="#5c5c5c" stroke-width="10" stroke-linecap="round"/><path d="M5 8L37 28" stroke="#8e8e8e" stroke-width="6.50" stroke-linecap="round"/><path d="M5.95 6.47L37.95 26.47" stroke="#c4c4c4" stroke-width="2.00" stroke-linecap="round" opacity="0.8"/><ellipse cx="38" cy="28.5" rx="3.5" ry="5.5" transform="rotate(-57 38 28.5)" fill="#666"/></svg>
<div class="t" style="left:329px;top:1001px;font-size:12.4px;color:#5aafd8">CLGR-D0222</div>
<div class="t" style="left:329px;top:1018px;font-size:10px;color:#1e1e1e;width:189px;overflow:hidden">Drill indexable D70-tmax185</div>
<div class="t" style="left:329px;top:1031px;font-size:10px;color:#1e1e1e;width:189px;overflow:hidden">R416.9-0700-25-01 / Coromant</div>
<div class="t" style="left:329px;top:1044px;font-size:10px;color:#1e1e1e;width:189px;overflow:hidden">Dc: 70.00 Xs: 185.00 Ltot: 240.00 Coolant: 1.00</div>
<div class="a" style="left:518px;top:162px;width:7px;height:798px;background:#dedede"></div>
<div class="a" style="left:263px;top:1042px;width:263px;height:7px;background:#f0f0f0"></div>
<div class="a" style="left:263px;top:133px;width:1px;height:917px;background:#e0e0e0"></div>
<div class="a" style="left:525px;top:162px;width:1px;height:880px;background:#e4e4e4"></div><div class="a" style="left:535px;top:107px;width:181px;height:936px;background:#fff;border:1px solid #d6d6d6;box-shadow:1px 1px 2px rgba(0,0,0,0.18)"></div>
<svg style="left:542px;top:116px" width="14" height="18" viewBox="0 0 14 18"><path d="M1.5 2 L12 7" stroke="#222" stroke-width="1.3"/><path d="M1 1.2 L4 2.8" stroke="#111" stroke-width="2.4"/><path d="M2 2 V16 H11 M2 9.5 H9.5 M2 13 H10.5" fill="none" stroke="#222" stroke-width="1.2"/><circle cx="10" cy="9.5" r="1.2" fill="none" stroke="#444" stroke-width="0.8"/><circle cx="11" cy="13" r="1.2" fill="none" stroke="#444" stroke-width="0.8"/><circle cx="12" cy="16" r="1.2" fill="none" stroke="#444" stroke-width="0.8"/></svg>
<div class="t" style="left:562px;top:116.5px;font-size:17.5px;color:#5eb3dc">Master D...</div>
<svg style="left:666px;top:115px" width="14" height="14" viewBox="0 0 14 14"><rect x="0.7" y="0.7" width="12.6" height="12.6" rx="1" fill="none" stroke="#555" stroke-width="1.1"/><path d="M3 3 L5.5 5.5 M3 3 H5 M3 3 V5 M11 3 L8.5 5.5 M11 3 H9 M11 3 V5 M3 11 L5.5 8.5 M3 11 H5 M3 11 V9 M11 11 L8.5 8.5 M11 11 H9 M11 11 V9" fill="none" stroke="#555" stroke-width="0.9"/></svg>
<svg style="left:690px;top:115px" width="14" height="14" viewBox="0 0 14 14"><path d="M1 1L13 13M13 1L1 13" stroke="#444" stroke-width="1.5"/></svg>
<div class="t" style="left:544px;top:145.5px;font-size:10.4px;color:#8a8a8a">Tool item ID</div>
<div class="t" style="left:544px;top:161.5px;font-size:10.4px;color:#1e1e1e;width:171px;overflow:hidden">CLGR-D0201</div>
<div class="t" style="left:544px;top:177.0px;font-size:10.4px;color:#1e1e1e;width:171px;overflow:hidden"><span style="letter-spacing:-0.22px">Reverse boring bar INS D15 max-D9.2</span></div>
<div class="t" style="left:544px;top:192.5px;font-size:10.4px;color:#1e1e1e;width:171px;overflow:hidden"><span style="letter-spacing:-0.1px">217180 15 / Hoffmann</span></div>
<div class="a" style="left:544px;top:207px;width:171px;height:1px;background:#e6e6e6"></div>
<div class="t" style="left:544px;top:215.5px;font-size:10.4px;color:#8a8a8a">Drawing</div>
<div class="t" style="left:544px;top:230.5px;font-size:10.4px;color:#1e1e1e;width:171px;overflow:hidden">CLGR-D0201</div>
<div class="a" style="left:544px;top:244px;width:171px;height:1px;background:#e6e6e6"></div>
<div class="t" style="left:544px;top:252.5px;font-size:10.4px;color:#8a8a8a">Tool class</div>
<div class="t" style="left:544px;top:268.0px;font-size:10.4px;color:#1e1e1e;text-decoration:underline;color:#555;width:171px;overflow:hidden">D07</div>
<div class="t" style="left:544px;top:283.5px;font-size:10.4px;color:#1e1e1e;width:171px;overflow:hidden"><span style="letter-spacing:-0.6px">DRILLS COUNTERSINKS</span></div>
<div class="a" style="left:544px;top:298px;width:171px;height:1px;background:#e6e6e6"></div>
<div class="t" style="left:544px;top:305.5px;font-size:10.4px;color:#8a8a8a">Tool group</div>
<div class="t" style="left:544px;top:321.5px;font-size:10.4px;color:#1e1e1e;text-decoration:underline;color:#555;width:171px;overflow:hidden">07</div>
<div class="t" style="left:544px;top:336.5px;font-size:10.4px;color:#1e1e1e;width:171px;overflow:hidden"><span style="letter-spacing:-0.6px">COUNTERBORES</span></div>
<div class="a" style="left:544px;top:351px;width:171px;height:1px;background:#e6e6e6"></div>
<div class="t" style="left:544px;top:359.5px;font-size:10.4px;color:#8a8a8a">Weight</div>
<div class="t" style="left:544px;top:374.5px;font-size:10.4px;color:#1e1e1e;width:171px;overflow:hidden">0.160</div>
<div class="a" style="left:544px;top:389px;width:171px;height:1px;background:#e6e6e6"></div>
<div class="t" style="left:544px;top:396.5px;font-size:10.4px;color:#8a8a8a">Generator reference</div>
<div class="a" style="left:544px;top:426px;width:171px;height:1px;background:#e6e6e6"></div>
<div class="t" style="left:544px;top:434.5px;font-size:10.4px;color:#8a8a8a">Usage type</div>
<div class="t" style="left:544px;top:449.5px;font-size:10.4px;color:#1e1e1e;width:171px;overflow:hidden">Durable</div>
<div class="a" style="left:544px;top:464px;width:171px;height:1px;background:#e6e6e6"></div>
<div class="t" style="left:544px;top:471.5px;font-size:10.4px;color:#8a8a8a">Tool crib information</div>
<div class="a" style="left:544px;top:501px;width:171px;height:1px;background:#e6e6e6"></div>
<div class="t" style="left:544px;top:509.5px;font-size:10.4px;color:#8a8a8a">Number of cutting edges</div>
<div class="t" style="left:544px;top:524.5px;font-size:10.4px;color:#1e1e1e;width:171px;overflow:hidden">1</div>
<div class="a" style="left:544px;top:539px;width:171px;height:1px;background:#e6e6e6"></div>
<div class="t" style="left:544px;top:546.5px;font-size:10.4px;color:#8a8a8a">Measuring system</div>
<div class="t" style="left:544px;top:562.5px;font-size:10.4px;color:#1e1e1e;width:171px;overflow:hidden">Metric</div>
<div class="a" style="left:544px;top:576px;width:171px;height:1px;background:#e6e6e6"></div>
<div class="t" style="left:544px;top:584.5px;font-size:10.4px;color:#8a8a8a">Status 1</div>
<div class="t" style="left:544px;top:599.5px;font-size:10.4px;color:#1e1e1e;width:171px;overflow:hidden">OK</div>
<div class="t" style="left:544px;top:615.5px;font-size:10.4px;color:#1e1e1e;width:171px;overflow:hidden">OK</div>
<div class="a" style="left:544px;top:630px;width:171px;height:1px;background:#e6e6e6"></div>
<div class="t" style="left:544px;top:637.5px;font-size:10.4px;color:#8a8a8a">Status 2</div>
<div class="a" style="left:544px;top:682px;width:171px;height:1px;background:#e6e6e6"></div><div class="a" style="left:722px;top:107px;width:949px;height:468px;background:#fff;border:1px solid #d2d2d2;box-shadow:1px 1px 2px rgba(0,0,0,0.2)"></div>
<svg style="left:723px;top:108px;overflow:hidden" width="947" height="466" viewBox="723 108 947 466"><defs><linearGradient id="body" gradientUnits="userSpaceOnUse" x1="1040" y1="270" x2="1025" y2="400"><stop offset="0" stop-color="#333"/><stop offset="0.03" stop-color="#616161"/><stop offset="0.16" stop-color="#929292"/><stop offset="0.4" stop-color="#b2b2b2"/><stop offset="0.68" stop-color="#a2a2a2"/><stop offset="0.9" stop-color="#686868"/><stop offset="1" stop-color="#333"/></linearGradient><linearGradient id="shaft" gradientUnits="userSpaceOnUse" x1="1400" y1="350" x2="1396" y2="392"><stop offset="0" stop-color="#444"/><stop offset="0.12" stop-color="#8a8a8a"/><stop offset="0.45" stop-color="#bcbcbc"/><stop offset="0.8" stop-color="#8a8a8a"/><stop offset="1" stop-color="#444"/></linearGradient><linearGradient id="flange" gradientUnits="userSpaceOnUse" x1="1160" y1="290" x2="1200" y2="430"><stop offset="0" stop-color="#8e8e8e"/><stop offset="0.3" stop-color="#b0b0b0"/><stop offset="0.8" stop-color="#a2a2a2"/><stop offset="1" stop-color="#7a7a7a"/></linearGradient><radialGradient id="neck" cx="0.55" cy="0.5" r="0.6"><stop offset="0" stop-color="#c8c8c8"/><stop offset="0.6" stop-color="#9a9a9a"/><stop offset="1" stop-color="#555"/></radialGradient></defs><path d="M737.9 128.0L724.0 130.7M793.9 131.8L724.0 146.1M852.4 135.7L724.0 164.5M913.4 139.7L724.0 186.8M977.3 144.0L724.0 214.3M1044.2 148.5L724.0 249.0M1114.3 153.1L724.0 294.4M1187.8 158.0L724.0 356.1M1265.1 163.2L724.0 445.0M1346.3 168.6L740.6 573.0M1431.9 174.3L1003.0 573.0M1522.1 180.3L1265.6 573.0M1617.4 186.6L1528.4 573.0M724.0 140.8L1669.0 208.7M724.0 156.8L1669.0 230.5M724.0 175.7L1669.0 256.3M724.0 198.5L1669.0 287.4M724.0 226.5L1669.0 325.6M724.0 261.7L1669.0 373.5M724.0 307.2L1669.0 435.5M724.0 368.3L1669.0 518.9M724.0 455.0L1336.5 573.0" stroke="#e4e4e4" stroke-width="1" fill="none"/><path d="M837 386 L722 447 M837 386 L1152 435.5 M1575 503 L1670 518 M818.5 218.7 L836.5 386" stroke="#9c9c9c" stroke-width="1.4" fill="none"/><ellipse cx="811" cy="379" rx="11" ry="4" fill="none" stroke="#a8a8a8" stroke-width="1"/><ellipse cx="813" cy="377" rx="4" ry="10" fill="none" stroke="#a8a8a8" stroke-width="1"/><ellipse cx="852" cy="376" rx="10" ry="4" transform="rotate(-15 852 376)" fill="none" stroke="#a8a8a8" stroke-width="1"/><text x="820" y="250" font-family="Liberation Sans" font-size="36" fill="#5db5de" stroke="#fff" stroke-width="1.5" letter-spacing="3" textLength="213" lengthAdjust="spacingAndGlyphs">−12.5 mm</text><text x="988" y="439.5" font-family="Liberation Sans" font-size="35" fill="#5db5de" stroke="#fff" stroke-width="1.5" letter-spacing="3" textLength="180" lengthAdjust="spacingAndGlyphs">−50 mm</text><text x="1568" y="538" font-family="Liberation Sans" font-size="44" fill="#5db5de" stroke="#fff" stroke-width="1.7" letter-spacing="3" textLength="175" lengthAdjust="spacingAndGlyphs">55 mm</text><text x="713 740 763.8 811.3" y="552" font-family="Liberation Sans" font-size="47" fill="#5db5de" stroke="#fff" stroke-width="1.7">5 mm</text><path d="M809.4 139 L818.5 218.7" stroke="#5cb3dc" stroke-width="3.6" fill="none"/><ellipse cx="818.5" cy="219" rx="5" ry="6" fill="#5cb3dc"/><path d="M902 259.5 L1183 288 L1160 415 L897 376.5 C857 370.6 862 255.5 902 259.5 Z" fill="url(#body)" stroke="#1a1a1a" stroke-width="1.6"/><path d="M978 310.5 L1040 318 C1046 340 1047 365 1045 389 L983.5 379 C964 365 958 332 978 310.5 Z" fill="#a2a2a2" stroke="#262626" stroke-width="1"/><path d="M1040 318 C1046 340 1047 365 1045 389 L1042 389 C1043 365 1041 340 1036 318Z" fill="#555"/><path d="M1182.5 272.7 L1233 277.2 C1218 300 1196 340 1194 378 C1194 405 1200 430 1212 441 L1163 434 C1150 420 1144 380 1148 350 C1152 315 1165 285 1182.5 272.7 Z" fill="url(#flange)" stroke="#222" stroke-width="1"/><path d="M1226 278 C1240 276 1252 300 1251 335 C1250 380 1236 430 1214 441 C1200 436 1193 405 1194 378 C1196 340 1210 295 1226 278 Z" fill="#484848" stroke="#1e1e1e" stroke-width="1"/><path d="M1215 313 C1222 325 1232 335 1247 337 L1247 368.5 C1232 371 1222 380 1215 391 C1207 372 1207 332 1215 313 Z" fill="url(#neck)"/><path d="M1215 313 C1222 325 1232 335 1247 337" fill="none" stroke="#333" stroke-width="0.8"/><path d="M1246 337 L1460 359.5 L1460 386 L1557 398 L1556 408.6 L1246 368.6 Z" fill="url(#shaft)" stroke="#1e1e1e" stroke-width="1.1"/><path d="M1460 343 L1563 353 L1557 398 L1460 386 Z" fill="#a9a9a9" stroke="#1a1a1a" stroke-width="1.4"/><path d="M1563 353 L1556 408.6" stroke="#1a1a1a" stroke-width="1.6"/><path d="M1460 380.5 L1557.5 392.5 L1557 398 L1460 386 Z" fill="#3c3c3c"/><path d="M1462 344 L1468 338.7 L1485 344.3 L1504 350 Z" fill="#e0ab12" stroke="#2a2a2a" stroke-width="0.8"/><path d="M1462 344 L1504 350 L1501.7 384.2 L1462.5 380 Z" fill="#e6b813" stroke="#2a2a2a" stroke-width="1"/><path d="M1334.4 464.8 L1264.6 573" stroke="#a4a4a4" stroke-width="1.2"/><path d="M1152 435.5 L1570 502" stroke="#5cb3dc" stroke-width="3.6" fill="none"/><ellipse cx="1571" cy="502" rx="7" ry="4" fill="#5cb3dc"/><ellipse cx="772" cy="553" rx="37" ry="14.5" fill="none" stroke="#cbcbcb" stroke-width="7"/><path d="M747.5 520 L783 522 L783 559 L748 557 Z" fill="#ececec" stroke="#8a8a8a" stroke-width="0.8"/><path d="M747.5 520 L763 514 L792 515.5 L783 522 Z" fill="#9a9a9a" stroke="#777" stroke-width="0.8"/><path d="M783 522 L792 515.5 L792 544 L783 559 Z" fill="#b5b5b5" stroke="#777" stroke-width="0.8"/><text x="759" y="545" font-family="Liberation Sans" font-weight="bold" font-size="8" fill="#333" transform="rotate(8 765 542)">Top</text><text x="767" y="519" font-family="Liberation Sans" font-weight="bold" font-size="4" fill="#444">Back</text><circle cx="1601" cy="542" r="16.5" fill="#f7f7f7" stroke="#c4c4c4" stroke-width="1.5"/><circle cx="1638" cy="542" r="16.5" fill="#f7f7f7" stroke="#c4c4c4" stroke-width="1.5"/><path d="M1595 536 L1599.5 540.5 M1595 536 H1598 M1595 536 V539 M1607 536 L1602.5 540.5 M1607 536 H1604 M1607 536 V539 M1595 548 L1599.5 543.5 M1595 548 H1598 M1595 548 V545 M1607 548 L1602.5 543.5 M1607 548 H1604 M1607 548 V545" stroke="#222" stroke-width="1.2" fill="none"/><path d="M1647.27 539.93 L1647.27 544.07 L1644.36 544.40 L1644.19 544.81 L1646.02 547.09 L1643.09 550.02 L1640.81 548.19 L1640.40 548.36 L1640.07 551.27 L1635.93 551.27 L1635.60 548.36 L1635.19 548.19 L1632.91 550.02 L1629.98 547.09 L1631.81 544.81 L1631.64 544.40 L1628.73 544.07 L1628.73 539.93 L1631.64 539.60 L1631.81 539.19 L1629.98 536.91 L1632.91 533.98 L1635.19 535.81 L1635.60 535.64 L1635.93 532.73 L1640.07 532.73 L1640.40 535.64 L1640.81 535.81 L1643.09 533.98 L1646.02 536.91 L1644.19 539.19 L1644.36 539.60Z M1641.3 542 A3.3 3.3 0 1 0 1634.7 542 A3.3 3.3 0 1 0 1641.3 542Z" fill="#111" fill-rule="evenodd"/></svg>
<svg style="left:727px;top:118px" width="19" height="13" viewBox="0 0 19 13"><rect x="0.7" y="0.7" width="17.6" height="11.6" fill="none" stroke="#666" stroke-width="1.2"/><rect x="3" y="3" width="3" height="2" fill="#888"/><path d="M3 8.5 H15" stroke="#888" stroke-width="1.3"/></svg>
<div class="t" style="left:750px;top:118px;font-size:15px;color:#7c7c7c">2D Graphic [dxf]</div>
<svg style="left:867px;top:118px" width="19" height="13" viewBox="0 0 19 13"><rect x="0.7" y="0.7" width="17.6" height="11.6" fill="none" stroke="#222" stroke-width="1.3"/><path d="M3 3 L13 9.5" stroke="#222" stroke-width="1.8"/><path d="M13 3 h3" stroke="#444" stroke-width="1"/></svg>
<div class="t" style="left:890px;top:115px;font-size:17.7px;color:#62b6de">3D Graphic [of1]</div>
<svg style="left:1028px;top:119px" width="18" height="12" viewBox="0 0 18 12"><rect x="0.7" y="0.7" width="16.6" height="10.6" fill="none" stroke="#555" stroke-width="1.2"/><path d="M2.5 9.5 L6 4.5 L8.5 7.5 L10 6 L12.5 9.5 Z" fill="#555"/><circle cx="13" cy="4" r="1.5" fill="#555"/></svg>
<div class="t" style="left:1050px;top:118px;font-size:15px;color:#7c7c7c">Image</div>
<svg style="left:1101px;top:117px" width="19" height="15" viewBox="0 0 19 15"><rect x="2.5" y="2.5" width="15.5" height="10.5" fill="none" stroke="#666" stroke-width="1.2"/><path d="M1 1 V14 M3 1 H17 M5 6 H9 M5 10 H15" stroke="#888" stroke-width="1"/></svg>
<div class="t" style="left:1123px;top:118px;font-size:14.6px;color:#7c7c7c">Parameter Graphic</div>
<svg style="left:1481px;top:115px" width="15" height="15" viewBox="0 0 15 15"><path d="M1.5 13.5 L2.3 10 L10.5 1.8 Q11.3 1 12.1 1.8 L13.2 2.9 Q14 3.7 13.2 4.5 L5 12.7 Z" fill="none" stroke="#c8c8c8" stroke-width="1.1"/></svg>
<svg style="left:1507px;top:116px" width="14" height="14" viewBox="0 0 14 14"><rect x="0.7" y="0.7" width="12.6" height="12.6" rx="1" fill="none" stroke="#6a6a6a" stroke-width="1.1"/><path d="M3 3 L5.5 5.5 M3 3 H5 M3 3 V5 M11 3 L8.5 5.5 M11 3 H9 M11 3 V5 M3 11 L5.5 8.5 M3 11 H5 M3 11 V9 M11 11 L8.5 8.5 M11 11 H9 M11 11 V9" fill="none" stroke="#6a6a6a" stroke-width="0.9"/></svg>
<svg style="left:1532px;top:115px" width="14" height="16" viewBox="0 0 14 16"><path d="M1 3.5H13M5 3.5V1.5H9V3.5M2.5 3.5V14.5H11.5V3.5M5 6V12.5M7 6V12.5M9 6V12.5" fill="none" stroke="#6a6a6a" stroke-width="1.1"/></svg>
<svg style="left:1555px;top:115px" width="16" height="15" viewBox="0 0 16 15"><path d="M1 9 V14 H15 V9 M8 11 V1.5 M5 4.5 L8 1.5 L11 4.5" fill="none" stroke="#6a6a6a" stroke-width="1.1"/></svg>
<svg style="left:1579px;top:115px" width="16" height="15" viewBox="0 0 16 15"><path d="M1 9 V14 H15 V9 M8 1 V10.5 M5 7.5 L8 10.5 L11 7.5" fill="none" stroke="#6a6a6a" stroke-width="1.1"/></svg>
<svg style="left:1604px;top:115px" width="16" height="16" viewBox="0 0 16 16"><path d="M1 1 H12.5 L15 3.5 V15 H1 Z M4 1 V5.5 H11 V1 M3.5 15 V9.5 H12.5 V15" fill="none" stroke="#6a6a6a" stroke-width="1.1"/></svg>
<svg style="left:1624px;top:120px" width="9" height="6" viewBox="0 0 9 6"><path d="M1 1 L4.5 4.5 L8 1" fill="none" stroke="#111" stroke-width="1.6"/></svg>
<svg style="left:1645px;top:116px" width="14" height="14" viewBox="0 0 14 14"><path d="M1 1L13 13M13 1L1 13" stroke="#555" stroke-width="1.6"/></svg><div class="a" style="left:722px;top:582px;width:949px;height:461px;background:#fff;border:1px solid #d2d2d2;box-shadow:1px 1px 2px rgba(0,0,0,0.2)"></div>
<svg style="left:728px;top:592px" width="18" height="17" viewBox="0 0 18 17"><path d="M3.5 1 H1.2 V16 H3.5" fill="none" stroke="#222" stroke-width="1.4"/><path d="M1.2 4h1.5M1.2 7h1.5M1.2 10h1.5M1.2 13h1.5" stroke="#555" stroke-width="0.8"/><circle cx="11" cy="8.5" r="4.5" fill="none" stroke="#222" stroke-width="1.3"/><path d="M6 14 L16 3" stroke="#222" stroke-width="1.3"/></svg>
<div class="t" style="left:750.5px;top:592px;font-size:17.2px;color:#62b6de">Parameters</div>
<svg style="left:849px;top:593px" width="19" height="14" viewBox="0 0 19 14"><path d="M1 1.5 H11 V10.5 H1 Z M11 4.5 H15 L18 8 V10.5 H11" fill="none" stroke="#666" stroke-width="1.2"/><circle cx="4.5" cy="11.5" r="1.8" fill="#fff" stroke="#666" stroke-width="1.1"/><circle cx="14.5" cy="11.5" r="1.8" fill="#fff" stroke="#666" stroke-width="1.1"/></svg>
<div class="t" style="left:872px;top:593px;font-size:14.3px;color:#7c7c7c">Suppliers</div>
<svg style="left:1570px;top:590px" width="16" height="16" viewBox="0 0 16 16"><path d="M1 10 V15 H15 V10 M8 12 V1.5 M5.5 4 L8 1.5 L10.5 4" fill="none" stroke="#7a7a7a" stroke-width="1"/><rect x="6" y="8" width="4" height="4" fill="none" stroke="#7a7a7a" stroke-width="0.8"/></svg>
<svg style="left:1595px;top:590px" width="15" height="15" viewBox="0 0 15 15"><rect x="0.7" y="0.7" width="13.6" height="13.6" rx="1" fill="none" stroke="#7a7a7a" stroke-width="1.1"/><path d="M3.5 3.5 L6 6 M3.5 3.5 H5.5 M3.5 3.5 V5.5 M11.5 3.5 L9 6 M11.5 3.5 H9.5 M11.5 3.5 V5.5 M3.5 11.5 L6 9 M3.5 11.5 H5.5 M3.5 11.5 V9.5 M11.5 11.5 L9 9 M11.5 11.5 H9.5 M11.5 11.5 V9.5" fill="none" stroke="#7a7a7a" stroke-width="0.9"/></svg>
<svg style="left:1619px;top:589px" width="16" height="16" viewBox="0 0 16 16"><path d="M1.5 14.5 L2.3 11 L11 2.3 Q11.8 1.5 12.6 2.3 L13.7 3.4 Q14.5 4.2 13.7 5 L5 13.7 Z M9.5 3.8 L12.2 6.5" fill="none" stroke="#7a7a7a" stroke-width="1.1"/></svg>
<svg style="left:1645px;top:591px" width="14" height="14" viewBox="0 0 14 14"><path d="M1 1L13 13M13 1L1 13" stroke="#555" stroke-width="1.6"/></svg>
<div class="a" style="left:766px;top:622px;width:1px;height:26px;background:#dcdcdc"></div>
<div class="a" style="left:848px;top:622px;width:1px;height:26px;background:#dcdcdc"></div>
<div class="a" style="left:899px;top:622px;width:1px;height:26px;background:#dcdcdc"></div>
<div class="a" style="left:944px;top:622px;width:1px;height:26px;background:#dcdcdc"></div>
<div class="a" style="left:1170px;top:622px;width:1px;height:26px;background:#dcdcdc"></div>
<div class="a" style="left:1235px;top:622px;width:1px;height:26px;background:#dcdcdc"></div>
<div class="a" style="left:1326px;top:622px;width:1px;height:26px;background:#dcdcdc"></div>
<div class="t" style="left:776px;top:630px;font-size:10.6px;color:#1a1a1a;font-weight:bold;letter-spacing:-0.1px">Name</div>
<div class="t" style="left:857px;top:630px;font-size:10.6px;color:#1a1a1a;font-weight:bold;letter-spacing:-0.1px">Value</div>
<div class="t" style="left:907px;top:630px;font-size:10.6px;color:#1a1a1a;font-weight:bold;letter-spacing:-0.1px">Unit</div>
<div class="t" style="left:953px;top:630px;font-size:10.6px;color:#1a1a1a;font-weight:bold;letter-spacing:-0.1px">Description</div>
<div class="t" style="left:1179px;top:630px;font-size:10.6px;color:#1a1a1a;font-weight:bold;letter-spacing:-0.1px">Position</div>
<div class="t" style="left:1245px;top:630px;font-size:10.6px;color:#1a1a1a;font-weight:bold;letter-spacing:-0.1px">Function Type</div>
<div class="a" style="left:723px;top:647px;width:940px;height:2px;background:#b4b4b4"></div>
<div class="a" style="left:744px;top:655px;width:2px;height:10px;background:#333"></div><div class="a" style="left:744px;top:667px;width:2px;height:2px;background:#333"></div>
<div class="t" style="left:772px;top:657px;font-size:10.4px;color:#222">Dc</div>
<div class="t" style="left:800px;top:657px;width:97px;text-align:right;font-size:10.4px;color:#222">15</div>
<div class="t" style="left:900.5px;top:657px;font-size:10.4px;color:#222">mm</div>
<div class="t" style="left:949.5px;top:657px;font-size:10.4px;color:#222">Cutting diameter 1</div>
<div class="t" style="left:1176px;top:657px;font-size:10.4px;color:#222">1</div>
<div class="t" style="left:1240.5px;top:657px;font-size:10.4px;color:#222;letter-spacing:-0.3px">DC</div>
<div class="a" style="left:723px;top:672px;width:937px;height:22px;background:#f5f5f5"></div>
<div class="a" style="left:744px;top:677px;width:2px;height:10px;background:#333"></div><div class="a" style="left:744px;top:689px;width:2px;height:2px;background:#333"></div>
<div class="t" style="left:772px;top:679px;font-size:10.4px;color:#222">Xs</div>
<div class="t" style="left:800px;top:679px;width:97px;text-align:right;font-size:10.4px;color:#222">42</div>
<div class="t" style="left:900.5px;top:679px;font-size:10.4px;color:#222">mm</div>
<div class="t" style="left:949.5px;top:679px;font-size:10.4px;color:#222">Gauge length</div>
<div class="t" style="left:1176px;top:679px;font-size:10.4px;color:#222">2</div>
<div class="t" style="left:1240.5px;top:679px;font-size:10.4px;color:#222;letter-spacing:-0.3px">XS</div>
<div class="t" style="left:772px;top:701px;font-size:10.4px;color:#222">Ls</div>
<div class="t" style="left:800px;top:701px;width:97px;text-align:right;font-size:10.4px;color:#222">31</div>
<div class="t" style="left:900.5px;top:701px;font-size:10.4px;color:#222">mm</div>
<div class="t" style="left:949.5px;top:701px;font-size:10.4px;color:#222">Cutting edge length</div>
<div class="t" style="left:1176px;top:701px;font-size:10.4px;color:#222">3</div>
<div class="t" style="left:1240.5px;top:701px;font-size:10.4px;color:#222;letter-spacing:-0.3px">LC</div>
<div class="a" style="left:723px;top:716px;width:937px;height:22px;background:#f5f5f5"></div>
<div class="t" style="left:772px;top:723px;font-size:10.4px;color:#222">L4</div>
<div class="t" style="left:800px;top:723px;width:97px;text-align:right;font-size:10.4px;color:#222">31</div>
<div class="t" style="left:900.5px;top:723px;font-size:10.4px;color:#222">mm</div>
<div class="t" style="left:949.5px;top:723px;font-size:10.4px;color:#222">Max. cutting depth</div>
<div class="t" style="left:1176px;top:723px;font-size:10.4px;color:#222">5</div>
<div class="t" style="left:1240.5px;top:723px;font-size:10.4px;color:#222;letter-spacing:-0.3px">L4</div>
<div class="t" style="left:772px;top:745px;font-size:10.4px;color:#222">Ltot</div>
<div class="t" style="left:800px;top:745px;width:97px;text-align:right;font-size:10.4px;color:#222">105</div>
<div class="t" style="left:900.5px;top:745px;font-size:10.4px;color:#222">mm</div>
<div class="t" style="left:949.5px;top:745px;font-size:10.4px;color:#222">Total tool item length</div>
<div class="t" style="left:1176px;top:745px;font-size:10.4px;color:#222">6</div>
<div class="t" style="left:1240.5px;top:745px;font-size:10.4px;color:#222;letter-spacing:-0.3px">L TOTAL</div>
<div class="a" style="left:723px;top:760px;width:937px;height:22px;background:#f5f5f5"></div>
<div class="t" style="left:772px;top:767px;font-size:10.4px;color:#222">Y</div>
<div class="t" style="left:900.5px;top:767px;font-size:10.4px;color:#222">mm</div>
<div class="t" style="left:949.5px;top:767px;font-size:10.4px;color:#222">Y Traverse path</div>
<div class="t" style="left:1176px;top:767px;font-size:10.4px;color:#222">8</div>
<div class="t" style="left:1240.5px;top:767px;font-size:10.4px;color:#222;letter-spacing:-0.3px">Y WAY</div>
<div class="t" style="left:772px;top:788px;font-size:10.4px;color:#222">Tue</div>
<div class="t" style="left:800px;top:788px;width:97px;text-align:right;font-size:10.4px;color:#222">13.5</div>
<div class="t" style="left:900.5px;top:788px;font-size:10.4px;color:#222">mm</div>
<div class="t" style="left:949.5px;top:788px;font-size:10.4px;color:#222">Minor diameter</div>
<div class="t" style="left:1176px;top:788px;font-size:10.4px;color:#222">9</div>
<div class="t" style="left:1240.5px;top:788px;font-size:10.4px;color:#222;letter-spacing:-0.3px">D INSIDE</div>
<div class="a" style="left:723px;top:803px;width:937px;height:22px;background:#f5f5f5"></div>
<div class="t" style="left:772px;top:810px;font-size:10.4px;color:#222">D max</div>
<div class="t" style="left:800px;top:810px;width:97px;text-align:right;font-size:10.4px;color:#222">15</div>
<div class="t" style="left:900.5px;top:810px;font-size:10.4px;color:#222">mm</div>
<div class="t" style="left:949.5px;top:810px;font-size:10.4px;color:#222">Max. diameter</div>
<div class="t" style="left:1176px;top:810px;font-size:10.4px;color:#222">10</div>
<div class="t" style="left:1240.5px;top:810px;font-size:10.4px;color:#222;letter-spacing:-0.3px">D MAX</div>
<div class="t" style="left:772px;top:832px;font-size:10.4px;color:#222">D Min</div>
<div class="t" style="left:800px;top:832px;width:97px;text-align:right;font-size:10.4px;color:#222">9.2</div>
<div class="t" style="left:900.5px;top:832px;font-size:10.4px;color:#222">mm</div>
<div class="t" style="left:949.5px;top:832px;font-size:10.4px;color:#222">Min. diameter</div>
<div class="t" style="left:1176px;top:832px;font-size:10.4px;color:#222">11</div>
<div class="t" style="left:1240.5px;top:832px;font-size:10.4px;color:#222;letter-spacing:-0.3px">D MIN</div>
<div class="a" style="left:723px;top:847px;width:937px;height:22px;background:#f5f5f5"></div>
<div class="t" style="left:772px;top:854px;font-size:10.4px;color:#222">Sigma</div>
<div class="t" style="left:800px;top:854px;width:97px;text-align:right;font-size:10.4px;color:#222">180</div>
<div class="t" style="left:900.5px;top:854px;font-size:10.4px;color:#222">°</div>
<div class="t" style="left:949.5px;top:854px;font-size:10.4px;color:#222">Tip angle</div>
<div class="t" style="left:1176px;top:854px;font-size:10.4px;color:#222">12</div>
<div class="t" style="left:1240.5px;top:854px;font-size:10.4px;color:#222;letter-spacing:-0.3px">A SIGMA</div>
<div class="t" style="left:772px;top:876px;font-size:10.4px;color:#222">a</div>
<div class="t" style="left:800px;top:876px;width:97px;text-align:right;font-size:10.4px;color:#222">13</div>
<div class="t" style="left:900.5px;top:876px;font-size:10.4px;color:#222">mm</div>
<div class="t" style="left:949.5px;top:876px;font-size:10.4px;color:#222">Tip Length</div>
<div class="t" style="left:1176px;top:876px;font-size:10.4px;color:#222">13</div>
<div class="t" style="left:1240.5px;top:876px;font-size:10.4px;color:#222;letter-spacing:-0.3px">L AMASS</div>
<div class="a" style="left:723px;top:891px;width:937px;height:22px;background:#f5f5f5"></div>
<div class="t" style="left:772px;top:898px;font-size:10.4px;color:#222">RE1</div>
<div class="t" style="left:900.5px;top:898px;font-size:10.4px;color:#222">mm</div>
<div class="t" style="left:949.5px;top:898px;font-size:10.4px;color:#222">Cutting corner radius</div>
<div class="t" style="left:1176px;top:898px;font-size:10.4px;color:#222">14</div>
<div class="t" style="left:1240.5px;top:898px;font-size:10.4px;color:#222;letter-spacing:-0.3px">R CORNER</div>
<div class="t" style="left:772px;top:920px;font-size:10.4px;color:#222">TT</div>
<div class="t" style="left:900.5px;top:920px;font-size:10.4px;color:#222">-</div>
<div class="t" style="left:949.5px;top:920px;font-size:10.4px;color:#222">tolerance tool</div>
<div class="t" style="left:1176px;top:920px;font-size:10.4px;color:#222">15</div>
<div class="t" style="left:1240.5px;top:920px;font-size:10.4px;color:#222;letter-spacing:-0.3px">TOLERANC</div>
<div class="a" style="left:723px;top:935px;width:937px;height:22px;background:#f5f5f5"></div>
<div class="t" style="left:772px;top:942px;font-size:10.4px;color:#222">D Drill</div>
<div class="t" style="left:900.5px;top:942px;font-size:10.4px;color:#222">mm</div>
<div class="t" style="left:949.5px;top:942px;font-size:10.4px;color:#222">Pilot diameter</div>
<div class="t" style="left:1176px;top:942px;font-size:10.4px;color:#222">17</div>
<div class="t" style="left:1240.5px;top:942px;font-size:10.4px;color:#222;letter-spacing:-0.3px">D CORE</div>
<div class="t" style="left:772px;top:964px;font-size:10.4px;color:#222">Helix</div>
<div class="t" style="left:800px;top:964px;width:97px;text-align:right;font-size:10.4px;color:#222">R</div>
<div class="t" style="left:900.5px;top:964px;font-size:10.4px;color:#222">-</div>
<div class="t" style="left:949.5px;top:964px;font-size:10.4px;color:#222">Spin direction</div>
<div class="t" style="left:1176px;top:964px;font-size:10.4px;color:#222">18</div>
<div class="t" style="left:1240.5px;top:964px;font-size:10.4px;color:#222;letter-spacing:-0.3px">HELIX</div>
<div class="a" style="left:723px;top:978px;width:937px;height:22px;background:#f5f5f5"></div>
<div class="t" style="left:772px;top:985px;font-size:10.4px;color:#222">Lambda</div>
<div class="t" style="left:900.5px;top:985px;font-size:10.4px;color:#222">°</div>
<div class="t" style="left:949.5px;top:985px;font-size:10.4px;color:#222">Lay angle</div>
<div class="t" style="left:1176px;top:985px;font-size:10.4px;color:#222">19</div>
<div class="t" style="left:1240.5px;top:985px;font-size:10.4px;color:#222;letter-spacing:-0.3px">A HELIX</div>
<div class="t" style="left:772px;top:1007px;font-size:10.4px;color:#222">CDL</div>
<div class="t" style="left:800px;top:1007px;width:97px;text-align:right;font-size:10.4px;color:#222">0</div>
<div class="t" style="left:900.5px;top:1007px;font-size:10.4px;color:#222">-</div>
<div class="t" style="left:949.5px;top:1007px;font-size:10.4px;color:#222">Hand</div>
<div class="t" style="left:1176px;top:1007px;font-size:10.4px;color:#222">20</div>
<div class="t" style="left:1240.5px;top:1007px;font-size:10.4px;color:#222;letter-spacing:-0.3px">SPIN</div>
<div class="a" style="left:723px;top:1022px;width:937px;height:22px;background:#f5f5f5"></div>
<div class="t" style="left:772px;top:1029px;font-size:10.4px;color:#222">Coolant</div>
<div class="t" style="left:800px;top:1029px;width:97px;text-align:right;font-size:10.4px;color:#222">1</div>
<div class="t" style="left:900.5px;top:1029px;font-size:10.4px;color:#222">-</div>
<div class="t" style="left:949.5px;top:1029px;font-size:10.4px;color:#222">Coolant</div>
<div class="t" style="left:1176px;top:1029px;font-size:10.4px;color:#222">24</div>
<div class="t" style="left:1240.5px;top:1029px;font-size:10.4px;color:#222;letter-spacing:-0.3px">ICOOLANT</div>
<div class="a" style="left:1662px;top:649px;width:6px;height:256px;background:#bdbdbd"></div><div class="a" style="left:0;top:0;width:1680px;height:1px;background:#3c3c3c"></div><div class="a" style="left:1679px;top:0;width:1px;height:98px;background:#3c3c3c"></div><div class="a" style="left:0;top:1049px;width:1680px;height:1px;background:#a8a8a8"></div><div class="a" style="left:1679px;top:98px;width:1px;height:952px;background:#a0a0a0"></div><div class="a" style="left:0;top:0;width:1px;height:1050px;background:#7a7a7a"></div></body></html>
